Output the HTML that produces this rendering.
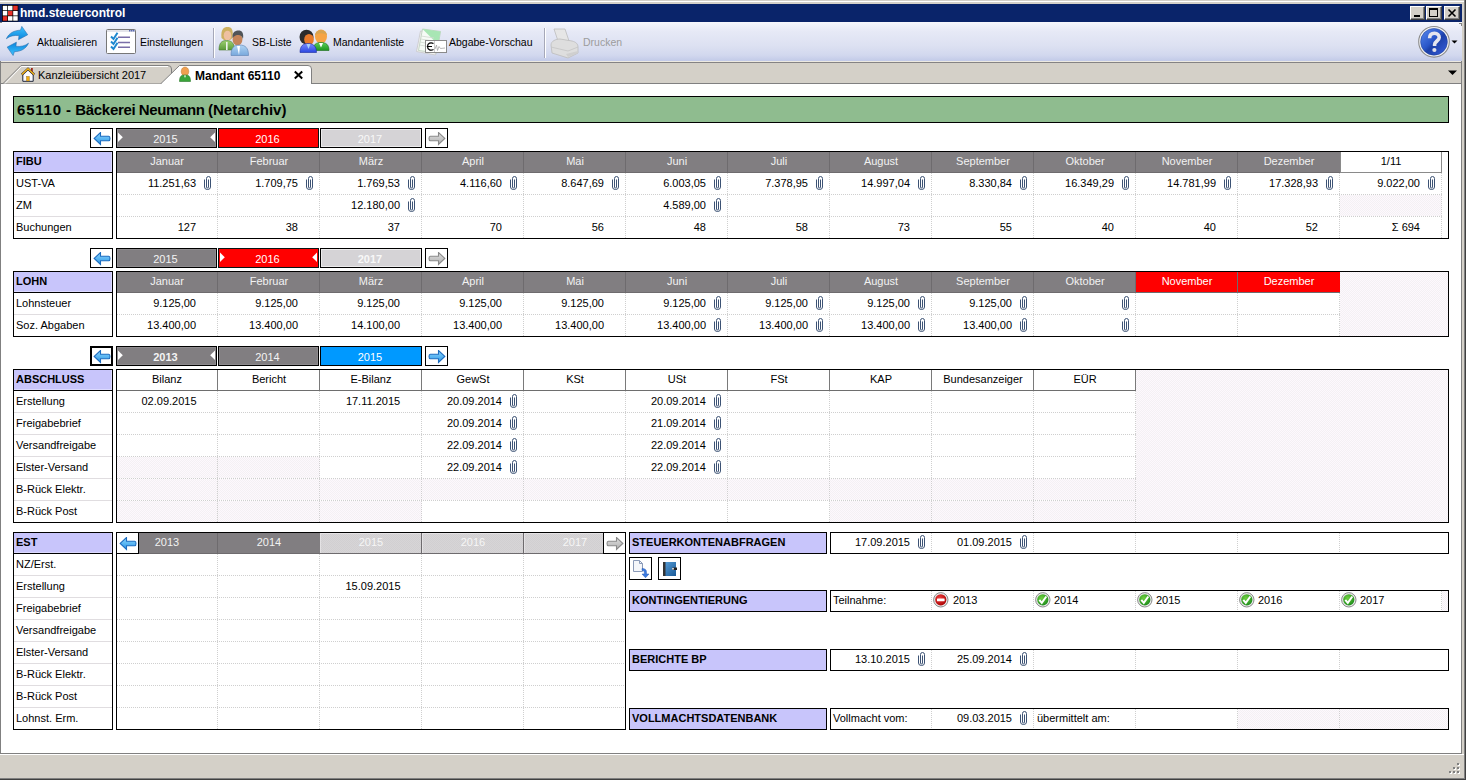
<!DOCTYPE html>
<html><head><meta charset="utf-8"><title>hmd.steuercontrol</title>
<style>
html,body{margin:0;padding:0;}
body{width:1466px;height:780px;overflow:hidden;position:relative;background:#d4d0c8;font-family:"Liberation Sans", sans-serif;}
div{position:absolute;box-sizing:border-box;}
.t{white-space:nowrap;}
</style></head><body>
<div style="left:0px;top:1px;width:1464px;height:1px;background:#ffffff"></div>
<div style="left:1464px;top:0px;width:1px;height:780px;background:#808080"></div>
<div style="left:1465px;top:0px;width:1px;height:780px;background:#404040"></div>
<div style="left:0px;top:778px;width:1464px;height:1px;background:#808080"></div>
<div style="left:0px;top:779px;width:1466px;height:1px;background:#404040"></div>
<div style="left:0px;top:4px;width:1462px;height:18px;background:#0a246a"></div>
<svg style="position:absolute;left:2px;top:5px;" width="17" height="17" viewBox="0 0 17 17"><rect x="0" y="0" width="16.4" height="16.4" fill="#000"/><rect x="0.80" y="0.80" width="4.5" height="4.5" fill="#ffffff"/><rect x="6.00" y="0.80" width="4.5" height="4.5" fill="#ffffff"/><rect x="11.20" y="0.80" width="4.5" height="4.5" fill="#e8312a"/><rect x="0.80" y="6.00" width="4.5" height="4.5" fill="#ffffff"/><rect x="6.00" y="6.00" width="4.5" height="4.5" fill="#e8312a"/><rect x="11.20" y="6.00" width="4.5" height="4.5" fill="#ffffff"/><rect x="0.80" y="11.20" width="4.5" height="4.5" fill="#e8312a"/><rect x="6.00" y="11.20" width="4.5" height="4.5" fill="#ffffff"/><rect x="11.20" y="11.20" width="4.5" height="4.5" fill="#ffffff"/></svg>
<div class="t" style="left:20px;top:2.84px;line-height:20px;font-size:12px;font-weight:bold;color:#ffffff;">hmd.steuercontrol</div>
<div style="left:1410px;top:6px;width:15px;height:14px;background:#d4d0c8;border-top:1px solid #fff;border-left:1px solid #fff;border-right:1px solid #404040;border-bottom:1px solid #404040;box-shadow:inset -1px -1px 0 #808080"></div>
<svg style="position:absolute;left:1410px;top:6px;" width="15" height="14" viewBox="0 0 15 14"><rect x="4" y="9" width="6" height="2" fill="#000"/></svg>
<div style="left:1426px;top:6px;width:16px;height:14px;background:#d4d0c8;border-top:1px solid #fff;border-left:1px solid #fff;border-right:1px solid #404040;border-bottom:1px solid #404040;box-shadow:inset -1px -1px 0 #808080"></div>
<svg style="position:absolute;left:1426px;top:6px;" width="16" height="14" viewBox="0 0 16 14"><rect x="3.5" y="2.5" width="8" height="8" fill="none" stroke="#000" stroke-width="1"/><rect x="3" y="2" width="9" height="2" fill="#000"/></svg>
<div style="left:1444px;top:6px;width:16px;height:14px;background:#d4d0c8;border-top:1px solid #fff;border-left:1px solid #fff;border-right:1px solid #404040;border-bottom:1px solid #404040;box-shadow:inset -1px -1px 0 #808080"></div>
<svg style="position:absolute;left:1444px;top:6px;" width="16" height="14" viewBox="0 0 16 14"><path d="M4.5,3.5 L11.5,10.5 M11.5,3.5 L4.5,10.5" stroke="#000" stroke-width="1.6"/></svg>
<div style="left:0px;top:22px;width:1462px;height:39px;background:linear-gradient(#f6f7fd 0%,#e6e9f6 25%,#dde1f2 60%,#d2d8ee 85%,#c2cae8 100%)"></div>
<div style="left:0px;top:61px;width:1462px;height:1px;background:#ece9e0"></div>
<div style="left:0px;top:62px;width:1462px;height:1px;background:#848284"></div>
<div style="left:1459px;top:23px;width:3px;height:1px;background:#808080"></div>
<div style="left:1461px;top:23px;width:1px;height:3px;background:#808080"></div>
<div style="left:0px;top:22px;width:2px;height:1px;background:#808080"></div>
<svg style="position:absolute;left:0px;top:22px;" width="36" height="40" viewBox="0 0 36 40"><defs><linearGradient id="rg" x1="0" y1="0" x2="0" y2="1"><stop offset="0" stop-color="#40c4ff"/><stop offset="1" stop-color="#0a84dc"/></linearGradient></defs><path d="M6.4,16.7 C9,11 14,8.5 20.5,8.2 L21.8,4.4 L27.7,12.8 L18.5,17.7 L19,13.6 C14,13 10,14 6.4,16.7 Z" fill="url(#rg)" stroke="#2a70b0" stroke-width="0.6"/><path d="M6.4,16.7 C9,11 14,8.5 20.5,8.2 L21.8,4.4 L27.7,12.8 L18.5,17.7 L19,13.6 C14,13 10,14 6.4,16.7 Z" transform="rotate(180 17.45 18.95)" fill="url(#rg)" stroke="#2a70b0" stroke-width="0.6"/></svg>
<div class="t" style="left:37px;top:32.36px;line-height:20px;font-size:10.5px;font-weight:normal;color:#000;">Aktualisieren</div>
<svg style="position:absolute;left:106px;top:29px;" width="30" height="25" viewBox="0 0 30 25"><rect x="0.5" y="0.5" width="29" height="24" rx="1" fill="#fff" stroke="#777" stroke-width="1"/><rect x="1" y="1" width="28" height="2" fill="#e4e4ea"/><rect x="23" y="1" width="1.5" height="1.5" fill="#5a6ab0"/><rect x="25" y="1" width="1.5" height="1.5" fill="#5a6ab0"/><rect x="27" y="1" width="1.5" height="1.5" fill="#5a6ab0"/><path d="M5,7.5 L7.5,10 L11.5,3.8 M5,12.5 L7.5,15 L11.5,8.8 M5,17.5 L7.5,20 L11.5,13.8" fill="none" stroke="#1f88d0" stroke-width="2"/><path d="M12,8.3 H24 M12,13.5 H24 M12,18.3 H24" stroke="#7a6ea8" stroke-width="1.4"/></svg>
<div class="t" style="left:140px;top:32.36px;line-height:20px;font-size:10.5px;font-weight:normal;color:#000;">Einstellungen</div>
<div style="left:213px;top:28px;width:1px;height:30px;background:#a6a8b8"></div>
<div style="left:214px;top:28px;width:1px;height:30px;background:#ffffff"></div>
<svg style="position:absolute;left:216px;top:24px;" width="36" height="34" viewBox="0 0 36 34"><defs><linearGradient id="gb1" x1="0" y1="0" x2="0" y2="1"><stop offset="0" stop-color="#9cd070"/><stop offset="1" stop-color="#5a9a3a"/></linearGradient><linearGradient id="bb1" x1="0" y1="0" x2="0" y2="1"><stop offset="0" stop-color="#b0d4f4"/><stop offset="1" stop-color="#78a8dc"/></linearGradient></defs><path d="M5.5,14 C4.5,5 8,3 11.5,3 C15.5,3 17.5,5 16.5,14 L14,16 L8,16 Z" fill="#cdb060"/><ellipse cx="11.5" cy="11.5" rx="3.8" ry="4.8" fill="#eec0a0"/><path d="M3,26 C3,19 5.5,16.5 10.5,16.5 C15.5,16.5 18.5,19 18.5,26 Z" fill="url(#gb1)" stroke="#4a7a30" stroke-width="0.6"/><rect x="10" y="18" width="1.6" height="8" fill="#eef2ee"/><ellipse cx="21.5" cy="15.5" rx="4.9" ry="6" fill="#c4845a"/><path d="M16.6,14 C16,7.5 20,6.5 22.5,6.5 C26,6.5 28,9 27,15 C26,11.5 24,10.5 21,11 C19,11.5 17.5,12.5 16.6,14 Z" fill="#505458"/><path d="M15,31.5 C15,24 17.5,21 23.5,21 C29.5,21 32.5,24 32.5,31.5 Z" fill="url(#bb1)" stroke="#5a80b0" stroke-width="0.6"/><path d="M21,22 L23,31 L24,22 Z" fill="#fff"/></svg>
<div class="t" style="left:252px;top:32.36px;line-height:20px;font-size:10.5px;font-weight:normal;color:#000;">SB-Liste</div>
<svg style="position:absolute;left:296px;top:24px;" width="36" height="34" viewBox="0 0 36 34"><defs><linearGradient id="gb2" x1="0" y1="0" x2="0" y2="1"><stop offset="0" stop-color="#5cd05c"/><stop offset="1" stop-color="#1c961c"/></linearGradient><linearGradient id="bb2" x1="0" y1="0" x2="0" y2="1"><stop offset="0" stop-color="#7a8cff"/><stop offset="1" stop-color="#2a46e0"/></linearGradient></defs><ellipse cx="25" cy="12.5" rx="6" ry="7" fill="#f6a444"/><path d="M19,11.5 C19,4.5 31,4.5 31,11.5 C29,8.5 21,8.5 19,11.5 Z" fill="#d8a450"/><path d="M17,26.5 C17,20.5 20,18.5 25,18.5 C30,18.5 33,20.5 33,26.5 Z" fill="url(#gb2)" stroke="#1a6a1a" stroke-width="0.6"/><path d="M23,19 L25,23.5 L27,19 Z" fill="#fff"/><ellipse cx="10.5" cy="13" rx="7" ry="7.3" fill="#2c2c2c"/><ellipse cx="13" cy="15.5" rx="4.8" ry="5.5" fill="#e87a2a"/><path d="M4,28.5 C4,22 7,19.5 12,19.5 C17,19.5 20.5,22 20.5,28.5 Z" fill="url(#bb2)" stroke="#1a2aa0" stroke-width="0.6"/><path d="M10.5,20 L12.5,25 L14.5,20 Z" fill="#a8d0f8"/></svg>
<div class="t" style="left:333px;top:32.36px;line-height:20px;font-size:10.5px;font-weight:normal;color:#000;">Mandantenliste</div>
<svg style="position:absolute;left:414px;top:26px;" width="34" height="32" viewBox="0 0 34 32"><path d="M2.5,25.5 L6.5,5 L25,7.5 L21.5,29 Z" fill="#f2f2f2" stroke="#c8c8c8" stroke-width="0.8"/><path d="M4.5,24.5 L8.5,3 L26.5,5.5 L23,27 Z" fill="#f6fbf6" stroke="#b8ccb8" stroke-width="0.8"/><path d="M8.5,3 L26.5,5.5 L24.8,16 L21,15.5 Z" fill="#a8e6b4"/><path d="M7,10 L20,12 M6.5,13 L19,15 M6,16 L11,17 M5.5,19 L11,20" stroke="#d0d8d0" stroke-width="0.8"/><rect x="11.5" y="14.5" width="21" height="12" fill="#fff" stroke="#8a8a8a" stroke-width="1"/><path d="M19.5,17.5 C17,16 13.5,17 13.5,20.5 C13.5,24 17,25 19.5,23.5 M12.8,20.5 H18" fill="none" stroke="#000" stroke-width="1.2"/><path d="M20.5,15 V26" stroke="#c0c0c0" stroke-width="0.8"/><path d="M21,23 L22.5,19 L23.5,24.5 L25,20.5 L26.5,22.5 L31,22" fill="none" stroke="#999" stroke-width="0.7"/></svg>
<div class="t" style="left:449px;top:32.36px;line-height:20px;font-size:10.5px;font-weight:normal;color:#000;">Abgabe-Vorschau</div>
<div style="left:544px;top:28px;width:1px;height:30px;background:#a6a8b8"></div>
<div style="left:545px;top:28px;width:1px;height:30px;background:#ffffff"></div>
<svg style="position:absolute;left:550px;top:25px;" width="32" height="34" viewBox="0 0 32 34"><path d="M4,4 L15,4 L19,16 L8,16 Z" fill="#e6e6e6" stroke="#bdbdbd" stroke-width="0.8"/><path d="M1,20 C1,16 6,14 10,14 L22,16 C26,17 28,19 28,22 L28,28 L18,33 L2,28 Z" fill="#dedede" stroke="#bdbdbd" stroke-width="0.8"/><path d="M1,22 L18,26 L28,22" fill="none" stroke="#c4c4c4" stroke-width="0.8"/><path d="M16,29 L28,26 L28,28 L18,32 Z" fill="#cfcfcf"/></svg>
<div class="t" style="left:583px;top:32.36px;line-height:20px;font-size:10.5px;font-weight:normal;color:#9c9c9c;">Drucken</div>
<svg style="position:absolute;left:1417px;top:25px;" width="34" height="34" viewBox="0 0 34 34"><defs><linearGradient id="hg" x1="0" y1="0" x2="1" y2="1"><stop offset="0" stop-color="#5a8cf0"/><stop offset="0.45" stop-color="#2a56c8"/><stop offset="0.55" stop-color="#1c40a8"/><stop offset="1" stop-color="#3a60e0"/></linearGradient></defs><circle cx="17" cy="16.8" r="15.3" fill="#f4f4f4" stroke="#8c8c8c" stroke-width="1.1"/><circle cx="17" cy="16.8" r="13.4" fill="url(#hg)" stroke="#1a3a90" stroke-width="0.5"/><path d="M12.6,13.2 C12.6,9.6 15,8.3 17.5,8.3 C20.4,8.3 22.2,10.2 22.2,12.6 C22.2,15.8 17.6,16.2 17.6,19.6 V21" fill="none" stroke="#e6e6ee" stroke-width="3.6"/><circle cx="17.4" cy="25" r="2.1" fill="#e0e0e8"/></svg>
<svg style="position:absolute;left:1451px;top:40px;" width="8" height="5" viewBox="0 0 8 5"><path d="M0.5,0.5 L6.5,0.5 L3.5,3.5 Z" fill="#000"/></svg>
<div style="left:0px;top:63px;width:1462px;height:20px;background:#d4d0c8"></div>
<div style="left:0px;top:61px;width:1px;height:693px;background:#808080"></div>
<div style="left:0px;top:83px;width:162px;height:1px;background:#808080"></div>
<div style="left:311px;top:83px;width:1151px;height:1px;background:#808080"></div>
<svg style="position:absolute;left:0px;top:63px;" width="175" height="21" viewBox="0 0 175 21"><path d="M3,20.5 L21,2.5 L168,2.5 Q171.5,2.5 171.5,6 L171.5,20.5" fill="#d4d0c8" stroke="#808080" stroke-width="1"/><path d="M5,20.5 L21.5,3.5 L168,3.5" fill="none" stroke="#ffffff" stroke-width="1"/></svg>
<svg style="position:absolute;left:20px;top:67px;" width="16" height="16" viewBox="0 0 16 16"><rect x="11" y="1" width="1.8" height="4.5" fill="#a02818"/><path d="M2.8,14.3 L2.8,7.6 L8,2.6 L13.2,7.6 L13.2,14.3 Z" fill="#fbfbff" stroke="#1c2438" stroke-width="1"/><path d="M1.8,7.6 L8,1.8 L14.2,7.6" fill="none" stroke="#303040" stroke-width="2.4"/><path d="M1.8,7.6 L8,1.8 L14.2,7.6" fill="none" stroke="#f4b414" stroke-width="1.4"/><rect x="6.4" y="9.3" width="3" height="4.7" fill="#f2ac10" stroke="#8a7040" stroke-width="0.4"/></svg>
<div class="t" style="left:38px;top:65.19px;line-height:20px;font-size:11px;font-weight:normal;color:#000;">Kanzlei&uuml;bersicht 2017</div>
<svg style="position:absolute;left:158px;top:63px;" width="158" height="22" viewBox="0 0 158 22"><path d="M3,21 L3,20.5 L21.5,2.5 L150,2.5 Q153.5,2.5 153.5,6 L153.5,21" fill="#ffffff" stroke="#808080" stroke-width="1"/></svg>
<div style="left:162px;top:84px;width:149px;height:1px;background:#ffffff"></div>
<svg style="position:absolute;left:177px;top:66px;" width="16" height="18" viewBox="0 0 16 18"><ellipse cx="8" cy="5.5" rx="3.8" ry="4.5" fill="#f0a050" stroke="#b87a30" stroke-width="0.5"/><path d="M2.5,15.5 C2.5,10 4.5,9 8,9 C11.5,9 13.5,10 13.5,15.5 Z" fill="#3aa43a" stroke="#2a7a2a" stroke-width="0.6"/><path d="M7,9.5 L8,12 L9,9.5 Z" fill="#fff"/></svg>
<div class="t" style="left:195px;top:65.84px;line-height:20px;font-size:12px;font-weight:bold;color:#000;">Mandant 65110</div>
<svg style="position:absolute;left:293px;top:70px;" width="12" height="11" viewBox="0 0 12 11"><path d="M1.8,1.5 L9.2,8.5 M9.2,1.5 L1.8,8.5" stroke="#000" stroke-width="2"/></svg>
<svg style="position:absolute;left:1448px;top:70px;" width="10" height="6" viewBox="0 0 10 6"><path d="M0,0.5 L9,0.5 L4.5,5 Z" fill="#000"/></svg>
<div style="left:1px;top:84px;width:1460px;height:669px;background:#ffffff"></div>
<div style="left:0px;top:753px;width:1462px;height:1px;background:#808080"></div>
<div style="left:1461px;top:61px;width:1px;height:693px;background:#808080"></div>
<div style="left:0px;top:754px;width:1464px;height:1px;background:#ffffff"></div>
<div style="left:1458px;top:764px;width:2px;height:2px;background:#ffffff"></div>
<div style="left:1457px;top:763px;width:2px;height:2px;background:#808080"></div>
<div style="left:1454px;top:768px;width:2px;height:2px;background:#ffffff"></div>
<div style="left:1453px;top:767px;width:2px;height:2px;background:#808080"></div>
<div style="left:1458px;top:768px;width:2px;height:2px;background:#ffffff"></div>
<div style="left:1457px;top:767px;width:2px;height:2px;background:#808080"></div>
<div style="left:1450px;top:772px;width:2px;height:2px;background:#ffffff"></div>
<div style="left:1449px;top:771px;width:2px;height:2px;background:#808080"></div>
<div style="left:1454px;top:772px;width:2px;height:2px;background:#ffffff"></div>
<div style="left:1453px;top:771px;width:2px;height:2px;background:#808080"></div>
<div style="left:1458px;top:772px;width:2px;height:2px;background:#ffffff"></div>
<div style="left:1457px;top:771px;width:2px;height:2px;background:#808080"></div>
<div style="left:13px;top:96px;width:1436px;height:27px;background:#8fbc8f;border:1px solid #000"></div>
<div class="t" style="left:17px;top:99.80px;line-height:20px;font-size:15px;font-weight:bold;color:#000;"><span style="letter-spacing:0.8px">65110</span> - <span style="letter-spacing:-0.3px">B&auml;ckerei</span><span style="word-spacing:-0.8px"> <span style="letter-spacing:-0.35px">Neumann</span> (Netarchiv)</span></div>
<div style="left:90px;top:128px;width:23px;height:20px;background:#fff;border:1px solid #000"></div>
<svg style="position:absolute;left:93px;top:132px;" width="18" height="14" viewBox="0 0 18 14"><defs><linearGradient id="la93_131" x1="0" y1="0" x2="0" y2="1"><stop offset="0" stop-color="#8ed8ff"/><stop offset="1" stop-color="#2a96e6"/></linearGradient></defs><path d="M1.2,6.4 L7.5,0.5 L7.5,4.3 L15.7,4.3 Q17,4.3 17,6.5 Q17,8.7 15.7,8.7 L7.5,8.7 L7.5,12.4 Z" fill="url(#la93_131)" stroke="#1c6cc0" stroke-width="1.1"/></svg>
<div style="left:116px;top:128px;width:101px;height:20px;background:#817e81;border:1px solid #000;box-shadow:inset 0 0 0 1px #8e8b8e"></div>
<svg style="position:absolute;left:118px;top:131px;" width="6" height="14" viewBox="0 0 6 14"><path d="M0,1.6 L4.8,6.3 L0,11 Z" fill="#fff"/></svg>
<svg style="position:absolute;left:210px;top:131px;" width="6" height="14" viewBox="0 0 6 14"><path d="M5,1.6 L0.2,6.3 L5,11 Z" fill="#fff"/></svg>
<div class="t" style="left:115px;width:101px;text-align:center;top:129.19px;line-height:20px;font-size:11px;font-weight:normal;color:#f4f4f4;">2015</div>
<div style="left:218px;top:128px;width:101px;height:20px;background:#ff0000;border:1px solid #0a1414"></div>
<div class="t" style="left:217px;width:101px;text-align:center;top:129.19px;line-height:20px;font-size:11px;font-weight:normal;color:#ffffff;">2016</div>
<div style="left:320px;top:128px;width:102px;height:20px;background:#d5d3d6;border:1px solid #000;box-shadow:inset 1px 1px 0 #ecebec, inset -1px -1px 0 #ecebec"></div>
<div class="t" style="left:319px;width:102px;text-align:center;top:129.19px;line-height:20px;font-size:11px;font-weight:normal;color:#f8f8f8;">2017</div>
<div style="left:425px;top:128px;width:23px;height:20px;background:#fff;border:1px solid #000"></div>
<svg style="position:absolute;left:428px;top:132px;" width="18" height="14" viewBox="0 0 18 14"><defs><linearGradient id="ra428_131" x1="0" y1="0" x2="0" y2="1"><stop offset="0" stop-color="#e0e0e0"/><stop offset="1" stop-color="#b0b0b0"/></linearGradient></defs><path d="M16.8,6.4 L10.5,0.5 L10.5,4.3 L2.3,4.3 Q1,4.3 1,6.5 Q1,8.7 2.3,8.7 L10.5,8.7 L10.5,12.4 Z" fill="url(#ra428_131)" stroke="#8a8a8a" stroke-width="1.1"/></svg>
<div style="left:13px;top:151px;width:100px;height:88px;background:#fff;border:1px solid #000"></div>
<div style="left:14px;top:152px;width:98px;height:20px;background:#c8c5fb;box-shadow:inset -1px -1px 0 #dcdafe"></div>
<div style="left:14px;top:172px;width:98px;height:1px;background:#000"></div>
<div class="t" style="left:16px;top:151.19px;line-height:20px;font-size:11px;font-weight:bold;color:#000;">FIBU</div>
<div class="t" style="left:16px;top:173.19px;line-height:20px;font-size:11px;font-weight:normal;color:#000;">UST-VA</div>
<div style="left:14px;top:194px;width:98px;height:1px;background:#e0dde0"></div>
<div class="t" style="left:16px;top:195.19px;line-height:20px;font-size:11px;font-weight:normal;color:#000;">ZM</div>
<div style="left:14px;top:216px;width:98px;height:1px;background:#e0dde0"></div>
<div class="t" style="left:16px;top:217.19px;line-height:20px;font-size:11px;font-weight:normal;color:#000;">Buchungen</div>
<div style="left:116px;top:151px;width:1333px;height:88px;background:#fff"></div>
<div style="left:1340px;top:195px;width:102px;height:21px;background-color:#fcf8fc;background-image:repeating-conic-gradient(#f4f1f4 0 25%,#fdf8fd 0 50%);background-size:2px 2px;"></div>
<div style="left:117px;top:194px;width:1325px;height:1px;background-image:repeating-linear-gradient(90deg,#cfcfcf 0 1px,transparent 1px 2px)"></div>
<div style="left:117px;top:216px;width:1325px;height:1px;background-image:repeating-linear-gradient(90deg,#cfcfcf 0 1px,transparent 1px 2px)"></div>
<div style="left:217px;top:173px;width:1px;height:65px;background-image:repeating-linear-gradient(180deg,#cfcfcf 0 1px,transparent 1px 2px)"></div>
<div style="left:319px;top:173px;width:1px;height:65px;background-image:repeating-linear-gradient(180deg,#cfcfcf 0 1px,transparent 1px 2px)"></div>
<div style="left:421px;top:173px;width:1px;height:65px;background-image:repeating-linear-gradient(180deg,#cfcfcf 0 1px,transparent 1px 2px)"></div>
<div style="left:523px;top:173px;width:1px;height:65px;background-image:repeating-linear-gradient(180deg,#cfcfcf 0 1px,transparent 1px 2px)"></div>
<div style="left:625px;top:173px;width:1px;height:65px;background-image:repeating-linear-gradient(180deg,#cfcfcf 0 1px,transparent 1px 2px)"></div>
<div style="left:727px;top:173px;width:1px;height:65px;background-image:repeating-linear-gradient(180deg,#cfcfcf 0 1px,transparent 1px 2px)"></div>
<div style="left:829px;top:173px;width:1px;height:65px;background-image:repeating-linear-gradient(180deg,#cfcfcf 0 1px,transparent 1px 2px)"></div>
<div style="left:931px;top:173px;width:1px;height:65px;background-image:repeating-linear-gradient(180deg,#cfcfcf 0 1px,transparent 1px 2px)"></div>
<div style="left:1033px;top:173px;width:1px;height:65px;background-image:repeating-linear-gradient(180deg,#cfcfcf 0 1px,transparent 1px 2px)"></div>
<div style="left:1135px;top:173px;width:1px;height:65px;background-image:repeating-linear-gradient(180deg,#cfcfcf 0 1px,transparent 1px 2px)"></div>
<div style="left:1237px;top:173px;width:1px;height:65px;background-image:repeating-linear-gradient(180deg,#cfcfcf 0 1px,transparent 1px 2px)"></div>
<div style="left:1339px;top:173px;width:1px;height:65px;background-image:repeating-linear-gradient(180deg,#cfcfcf 0 1px,transparent 1px 2px)"></div>
<div style="left:1441px;top:173px;width:1px;height:65px;background-image:repeating-linear-gradient(180deg,#cfcfcf 0 1px,transparent 1px 2px)"></div>
<div style="left:117px;top:152px;width:101px;height:20px;background:#817e81"></div>
<div class="t" style="left:116px;width:102px;text-align:center;top:151.19px;line-height:20px;font-size:11px;font-weight:normal;color:#f2f2f2;">Januar</div>
<div style="left:218px;top:152px;width:102px;height:20px;background:#817e81"></div>
<div class="t" style="left:218px;width:102px;text-align:center;top:151.19px;line-height:20px;font-size:11px;font-weight:normal;color:#f2f2f2;">Februar</div>
<div style="left:320px;top:152px;width:102px;height:20px;background:#817e81"></div>
<div class="t" style="left:320px;width:102px;text-align:center;top:151.19px;line-height:20px;font-size:11px;font-weight:normal;color:#f2f2f2;">M&auml;rz</div>
<div style="left:422px;top:152px;width:102px;height:20px;background:#817e81"></div>
<div class="t" style="left:422px;width:102px;text-align:center;top:151.19px;line-height:20px;font-size:11px;font-weight:normal;color:#f2f2f2;">April</div>
<div style="left:524px;top:152px;width:102px;height:20px;background:#817e81"></div>
<div class="t" style="left:524px;width:102px;text-align:center;top:151.19px;line-height:20px;font-size:11px;font-weight:normal;color:#f2f2f2;">Mai</div>
<div style="left:626px;top:152px;width:102px;height:20px;background:#817e81"></div>
<div class="t" style="left:626px;width:102px;text-align:center;top:151.19px;line-height:20px;font-size:11px;font-weight:normal;color:#f2f2f2;">Juni</div>
<div style="left:728px;top:152px;width:102px;height:20px;background:#817e81"></div>
<div class="t" style="left:728px;width:102px;text-align:center;top:151.19px;line-height:20px;font-size:11px;font-weight:normal;color:#f2f2f2;">Juli</div>
<div style="left:830px;top:152px;width:102px;height:20px;background:#817e81"></div>
<div class="t" style="left:830px;width:102px;text-align:center;top:151.19px;line-height:20px;font-size:11px;font-weight:normal;color:#f2f2f2;">August</div>
<div style="left:932px;top:152px;width:102px;height:20px;background:#817e81"></div>
<div class="t" style="left:932px;width:102px;text-align:center;top:151.19px;line-height:20px;font-size:11px;font-weight:normal;color:#f2f2f2;">September</div>
<div style="left:1034px;top:152px;width:102px;height:20px;background:#817e81"></div>
<div class="t" style="left:1034px;width:102px;text-align:center;top:151.19px;line-height:20px;font-size:11px;font-weight:normal;color:#f2f2f2;">Oktober</div>
<div style="left:1136px;top:152px;width:102px;height:20px;background:#817e81"></div>
<div class="t" style="left:1136px;width:102px;text-align:center;top:151.19px;line-height:20px;font-size:11px;font-weight:normal;color:#f2f2f2;">November</div>
<div style="left:1238px;top:152px;width:102px;height:20px;background:#817e81"></div>
<div class="t" style="left:1238px;width:102px;text-align:center;top:151.19px;line-height:20px;font-size:11px;font-weight:normal;color:#f2f2f2;">Dezember</div>
<div style="left:217px;top:152px;width:1px;height:20px;background:#6e6b6e"></div>
<div style="left:319px;top:152px;width:1px;height:20px;background:#6e6b6e"></div>
<div style="left:421px;top:152px;width:1px;height:20px;background:#6e6b6e"></div>
<div style="left:523px;top:152px;width:1px;height:20px;background:#6e6b6e"></div>
<div style="left:625px;top:152px;width:1px;height:20px;background:#6e6b6e"></div>
<div style="left:727px;top:152px;width:1px;height:20px;background:#6e6b6e"></div>
<div style="left:829px;top:152px;width:1px;height:20px;background:#6e6b6e"></div>
<div style="left:931px;top:152px;width:1px;height:20px;background:#6e6b6e"></div>
<div style="left:1033px;top:152px;width:1px;height:20px;background:#6e6b6e"></div>
<div style="left:1135px;top:152px;width:1px;height:20px;background:#6e6b6e"></div>
<div style="left:1237px;top:152px;width:1px;height:20px;background:#6e6b6e"></div>
<div style="left:117px;top:172px;width:1223px;height:1px;background:#6e6b6e"></div>
<div style="left:1340px;top:152px;width:102px;height:21px;background:#fff;border-right:1px solid #8a8a8a;border-bottom:1px solid #8a8a8a;border-left:1px solid #8a8a8a"></div>
<div class="t" style="left:1340px;width:102px;text-align:center;top:151.19px;line-height:20px;font-size:11px;font-weight:normal;color:#000;">1/11</div>
<div class="t" style="left:116px;width:80px;text-align:right;top:173.19px;line-height:20px;font-size:11px;font-weight:normal;color:#000;">11.251,63</div>
<svg style="position:absolute;left:204px;top:176px;" width="8" height="14" viewBox="0 0 8 14"><path d="M0.5,3.5 V11 Q0.5,13.5 3.5,13.5 Q6.5,13.5 6.5,11 V2.5 Q6.5,0.5 4.5,0.5 Q2.5,0.5 2.5,2.5 V11 Q2.5,12 3.5,12 Q4.5,12 4.5,11 V3.5" fill="none" stroke="#3c5274" stroke-width="1"/></svg>
<div class="t" style="left:218px;width:80px;text-align:right;top:173.19px;line-height:20px;font-size:11px;font-weight:normal;color:#000;">1.709,75</div>
<svg style="position:absolute;left:306px;top:176px;" width="8" height="14" viewBox="0 0 8 14"><path d="M0.5,3.5 V11 Q0.5,13.5 3.5,13.5 Q6.5,13.5 6.5,11 V2.5 Q6.5,0.5 4.5,0.5 Q2.5,0.5 2.5,2.5 V11 Q2.5,12 3.5,12 Q4.5,12 4.5,11 V3.5" fill="none" stroke="#3c5274" stroke-width="1"/></svg>
<div class="t" style="left:320px;width:80px;text-align:right;top:173.19px;line-height:20px;font-size:11px;font-weight:normal;color:#000;">1.769,53</div>
<svg style="position:absolute;left:408px;top:176px;" width="8" height="14" viewBox="0 0 8 14"><path d="M0.5,3.5 V11 Q0.5,13.5 3.5,13.5 Q6.5,13.5 6.5,11 V2.5 Q6.5,0.5 4.5,0.5 Q2.5,0.5 2.5,2.5 V11 Q2.5,12 3.5,12 Q4.5,12 4.5,11 V3.5" fill="none" stroke="#3c5274" stroke-width="1"/></svg>
<div class="t" style="left:422px;width:80px;text-align:right;top:173.19px;line-height:20px;font-size:11px;font-weight:normal;color:#000;">4.116,60</div>
<svg style="position:absolute;left:510px;top:176px;" width="8" height="14" viewBox="0 0 8 14"><path d="M0.5,3.5 V11 Q0.5,13.5 3.5,13.5 Q6.5,13.5 6.5,11 V2.5 Q6.5,0.5 4.5,0.5 Q2.5,0.5 2.5,2.5 V11 Q2.5,12 3.5,12 Q4.5,12 4.5,11 V3.5" fill="none" stroke="#3c5274" stroke-width="1"/></svg>
<div class="t" style="left:524px;width:80px;text-align:right;top:173.19px;line-height:20px;font-size:11px;font-weight:normal;color:#000;">8.647,69</div>
<svg style="position:absolute;left:612px;top:176px;" width="8" height="14" viewBox="0 0 8 14"><path d="M0.5,3.5 V11 Q0.5,13.5 3.5,13.5 Q6.5,13.5 6.5,11 V2.5 Q6.5,0.5 4.5,0.5 Q2.5,0.5 2.5,2.5 V11 Q2.5,12 3.5,12 Q4.5,12 4.5,11 V3.5" fill="none" stroke="#3c5274" stroke-width="1"/></svg>
<div class="t" style="left:626px;width:80px;text-align:right;top:173.19px;line-height:20px;font-size:11px;font-weight:normal;color:#000;">6.003,05</div>
<svg style="position:absolute;left:714px;top:176px;" width="8" height="14" viewBox="0 0 8 14"><path d="M0.5,3.5 V11 Q0.5,13.5 3.5,13.5 Q6.5,13.5 6.5,11 V2.5 Q6.5,0.5 4.5,0.5 Q2.5,0.5 2.5,2.5 V11 Q2.5,12 3.5,12 Q4.5,12 4.5,11 V3.5" fill="none" stroke="#3c5274" stroke-width="1"/></svg>
<div class="t" style="left:728px;width:80px;text-align:right;top:173.19px;line-height:20px;font-size:11px;font-weight:normal;color:#000;">7.378,95</div>
<svg style="position:absolute;left:816px;top:176px;" width="8" height="14" viewBox="0 0 8 14"><path d="M0.5,3.5 V11 Q0.5,13.5 3.5,13.5 Q6.5,13.5 6.5,11 V2.5 Q6.5,0.5 4.5,0.5 Q2.5,0.5 2.5,2.5 V11 Q2.5,12 3.5,12 Q4.5,12 4.5,11 V3.5" fill="none" stroke="#3c5274" stroke-width="1"/></svg>
<div class="t" style="left:830px;width:80px;text-align:right;top:173.19px;line-height:20px;font-size:11px;font-weight:normal;color:#000;">14.997,04</div>
<svg style="position:absolute;left:918px;top:176px;" width="8" height="14" viewBox="0 0 8 14"><path d="M0.5,3.5 V11 Q0.5,13.5 3.5,13.5 Q6.5,13.5 6.5,11 V2.5 Q6.5,0.5 4.5,0.5 Q2.5,0.5 2.5,2.5 V11 Q2.5,12 3.5,12 Q4.5,12 4.5,11 V3.5" fill="none" stroke="#3c5274" stroke-width="1"/></svg>
<div class="t" style="left:932px;width:80px;text-align:right;top:173.19px;line-height:20px;font-size:11px;font-weight:normal;color:#000;">8.330,84</div>
<svg style="position:absolute;left:1020px;top:176px;" width="8" height="14" viewBox="0 0 8 14"><path d="M0.5,3.5 V11 Q0.5,13.5 3.5,13.5 Q6.5,13.5 6.5,11 V2.5 Q6.5,0.5 4.5,0.5 Q2.5,0.5 2.5,2.5 V11 Q2.5,12 3.5,12 Q4.5,12 4.5,11 V3.5" fill="none" stroke="#3c5274" stroke-width="1"/></svg>
<div class="t" style="left:1034px;width:80px;text-align:right;top:173.19px;line-height:20px;font-size:11px;font-weight:normal;color:#000;">16.349,29</div>
<svg style="position:absolute;left:1122px;top:176px;" width="8" height="14" viewBox="0 0 8 14"><path d="M0.5,3.5 V11 Q0.5,13.5 3.5,13.5 Q6.5,13.5 6.5,11 V2.5 Q6.5,0.5 4.5,0.5 Q2.5,0.5 2.5,2.5 V11 Q2.5,12 3.5,12 Q4.5,12 4.5,11 V3.5" fill="none" stroke="#3c5274" stroke-width="1"/></svg>
<div class="t" style="left:1136px;width:80px;text-align:right;top:173.19px;line-height:20px;font-size:11px;font-weight:normal;color:#000;">14.781,99</div>
<svg style="position:absolute;left:1224px;top:176px;" width="8" height="14" viewBox="0 0 8 14"><path d="M0.5,3.5 V11 Q0.5,13.5 3.5,13.5 Q6.5,13.5 6.5,11 V2.5 Q6.5,0.5 4.5,0.5 Q2.5,0.5 2.5,2.5 V11 Q2.5,12 3.5,12 Q4.5,12 4.5,11 V3.5" fill="none" stroke="#3c5274" stroke-width="1"/></svg>
<div class="t" style="left:1238px;width:80px;text-align:right;top:173.19px;line-height:20px;font-size:11px;font-weight:normal;color:#000;">17.328,93</div>
<svg style="position:absolute;left:1326px;top:176px;" width="8" height="14" viewBox="0 0 8 14"><path d="M0.5,3.5 V11 Q0.5,13.5 3.5,13.5 Q6.5,13.5 6.5,11 V2.5 Q6.5,0.5 4.5,0.5 Q2.5,0.5 2.5,2.5 V11 Q2.5,12 3.5,12 Q4.5,12 4.5,11 V3.5" fill="none" stroke="#3c5274" stroke-width="1"/></svg>
<div class="t" style="left:1340px;width:80px;text-align:right;top:173.19px;line-height:20px;font-size:11px;font-weight:normal;color:#000;">9.022,00</div>
<svg style="position:absolute;left:1428px;top:176px;" width="8" height="14" viewBox="0 0 8 14"><path d="M0.5,3.5 V11 Q0.5,13.5 3.5,13.5 Q6.5,13.5 6.5,11 V2.5 Q6.5,0.5 4.5,0.5 Q2.5,0.5 2.5,2.5 V11 Q2.5,12 3.5,12 Q4.5,12 4.5,11 V3.5" fill="none" stroke="#3c5274" stroke-width="1"/></svg>
<div class="t" style="left:320px;width:80px;text-align:right;top:195.19px;line-height:20px;font-size:11px;font-weight:normal;color:#000;">12.180,00</div>
<svg style="position:absolute;left:408px;top:198px;" width="8" height="14" viewBox="0 0 8 14"><path d="M0.5,3.5 V11 Q0.5,13.5 3.5,13.5 Q6.5,13.5 6.5,11 V2.5 Q6.5,0.5 4.5,0.5 Q2.5,0.5 2.5,2.5 V11 Q2.5,12 3.5,12 Q4.5,12 4.5,11 V3.5" fill="none" stroke="#3c5274" stroke-width="1"/></svg>
<div class="t" style="left:626px;width:80px;text-align:right;top:195.19px;line-height:20px;font-size:11px;font-weight:normal;color:#000;">4.589,00</div>
<svg style="position:absolute;left:714px;top:198px;" width="8" height="14" viewBox="0 0 8 14"><path d="M0.5,3.5 V11 Q0.5,13.5 3.5,13.5 Q6.5,13.5 6.5,11 V2.5 Q6.5,0.5 4.5,0.5 Q2.5,0.5 2.5,2.5 V11 Q2.5,12 3.5,12 Q4.5,12 4.5,11 V3.5" fill="none" stroke="#3c5274" stroke-width="1"/></svg>
<div class="t" style="left:116px;width:80px;text-align:right;top:217.19px;line-height:20px;font-size:11px;font-weight:normal;color:#000;">127</div>
<div class="t" style="left:218px;width:80px;text-align:right;top:217.19px;line-height:20px;font-size:11px;font-weight:normal;color:#000;">38</div>
<div class="t" style="left:320px;width:80px;text-align:right;top:217.19px;line-height:20px;font-size:11px;font-weight:normal;color:#000;">37</div>
<div class="t" style="left:422px;width:80px;text-align:right;top:217.19px;line-height:20px;font-size:11px;font-weight:normal;color:#000;">70</div>
<div class="t" style="left:524px;width:80px;text-align:right;top:217.19px;line-height:20px;font-size:11px;font-weight:normal;color:#000;">56</div>
<div class="t" style="left:626px;width:80px;text-align:right;top:217.19px;line-height:20px;font-size:11px;font-weight:normal;color:#000;">48</div>
<div class="t" style="left:728px;width:80px;text-align:right;top:217.19px;line-height:20px;font-size:11px;font-weight:normal;color:#000;">58</div>
<div class="t" style="left:830px;width:80px;text-align:right;top:217.19px;line-height:20px;font-size:11px;font-weight:normal;color:#000;">73</div>
<div class="t" style="left:932px;width:80px;text-align:right;top:217.19px;line-height:20px;font-size:11px;font-weight:normal;color:#000;">55</div>
<div class="t" style="left:1034px;width:80px;text-align:right;top:217.19px;line-height:20px;font-size:11px;font-weight:normal;color:#000;">40</div>
<div class="t" style="left:1136px;width:80px;text-align:right;top:217.19px;line-height:20px;font-size:11px;font-weight:normal;color:#000;">40</div>
<div class="t" style="left:1238px;width:80px;text-align:right;top:217.19px;line-height:20px;font-size:11px;font-weight:normal;color:#000;">52</div>
<div class="t" style="left:1340px;width:80px;text-align:right;top:217.19px;line-height:20px;font-size:11px;font-weight:normal;color:#000;">&Sigma; 694</div>
<div style="left:90px;top:248px;width:23px;height:20px;background:#fff;border:1px solid #000"></div>
<svg style="position:absolute;left:93px;top:252px;" width="18" height="14" viewBox="0 0 18 14"><defs><linearGradient id="la93_251" x1="0" y1="0" x2="0" y2="1"><stop offset="0" stop-color="#8ed8ff"/><stop offset="1" stop-color="#2a96e6"/></linearGradient></defs><path d="M1.2,6.4 L7.5,0.5 L7.5,4.3 L15.7,4.3 Q17,4.3 17,6.5 Q17,8.7 15.7,8.7 L7.5,8.7 L7.5,12.4 Z" fill="url(#la93_251)" stroke="#1c6cc0" stroke-width="1.1"/></svg>
<div style="left:116px;top:248px;width:101px;height:20px;background:#817e81;border:1px solid #000;box-shadow:inset 0 0 0 1px #8e8b8e"></div>
<div class="t" style="left:115px;width:101px;text-align:center;top:249.19px;line-height:20px;font-size:11px;font-weight:normal;color:#f4f4f4;">2015</div>
<div style="left:218px;top:248px;width:101px;height:20px;background:#ff0000;border:1px solid #0a1414"></div>
<svg style="position:absolute;left:220px;top:251px;" width="6" height="14" viewBox="0 0 6 14"><path d="M0,1.6 L4.8,6.3 L0,11 Z" fill="#fff"/></svg>
<svg style="position:absolute;left:312px;top:251px;" width="6" height="14" viewBox="0 0 6 14"><path d="M5,1.6 L0.2,6.3 L5,11 Z" fill="#fff"/></svg>
<div class="t" style="left:217px;width:101px;text-align:center;top:249.19px;line-height:20px;font-size:11px;font-weight:normal;color:#ffffff;">2016</div>
<div style="left:320px;top:248px;width:102px;height:20px;background:#d5d3d6;border:1px solid #000;box-shadow:inset 1px 1px 0 #ecebec, inset -1px -1px 0 #ecebec"></div>
<div class="t" style="left:319px;width:102px;text-align:center;top:249.19px;line-height:20px;font-size:11px;font-weight:bold;color:#f8f8f8;">2017</div>
<div style="left:425px;top:248px;width:23px;height:20px;background:#fff;border:1px solid #000"></div>
<svg style="position:absolute;left:428px;top:252px;" width="18" height="14" viewBox="0 0 18 14"><defs><linearGradient id="ra428_251" x1="0" y1="0" x2="0" y2="1"><stop offset="0" stop-color="#e0e0e0"/><stop offset="1" stop-color="#b0b0b0"/></linearGradient></defs><path d="M16.8,6.4 L10.5,0.5 L10.5,4.3 L2.3,4.3 Q1,4.3 1,6.5 Q1,8.7 2.3,8.7 L10.5,8.7 L10.5,12.4 Z" fill="url(#ra428_251)" stroke="#8a8a8a" stroke-width="1.1"/></svg>
<div style="left:13px;top:271px;width:100px;height:66px;background:#fff;border:1px solid #000"></div>
<div style="left:14px;top:272px;width:98px;height:20px;background:#c8c5fb;box-shadow:inset -1px -1px 0 #dcdafe"></div>
<div style="left:14px;top:292px;width:98px;height:1px;background:#000"></div>
<div class="t" style="left:16px;top:271.19px;line-height:20px;font-size:11px;font-weight:bold;color:#000;">LOHN</div>
<div class="t" style="left:16px;top:293.19px;line-height:20px;font-size:11px;font-weight:normal;color:#000;">Lohnsteuer</div>
<div style="left:14px;top:314px;width:98px;height:1px;background:#e0dde0"></div>
<div class="t" style="left:16px;top:315.19px;line-height:20px;font-size:11px;font-weight:normal;color:#000;">Soz. Abgaben</div>
<div style="left:116px;top:271px;width:1333px;height:66px;background:#fff"></div>
<div style="left:1340px;top:272px;width:108px;height:64px;background-color:#fcf8fc;background-image:repeating-conic-gradient(#f4f1f4 0 25%,#fdf8fd 0 50%);background-size:2px 2px;"></div>
<div style="left:117px;top:314px;width:1223px;height:1px;background-image:repeating-linear-gradient(90deg,#cfcfcf 0 1px,transparent 1px 2px)"></div>
<div style="left:217px;top:293px;width:1px;height:43px;background-image:repeating-linear-gradient(180deg,#cfcfcf 0 1px,transparent 1px 2px)"></div>
<div style="left:319px;top:293px;width:1px;height:43px;background-image:repeating-linear-gradient(180deg,#cfcfcf 0 1px,transparent 1px 2px)"></div>
<div style="left:421px;top:293px;width:1px;height:43px;background-image:repeating-linear-gradient(180deg,#cfcfcf 0 1px,transparent 1px 2px)"></div>
<div style="left:523px;top:293px;width:1px;height:43px;background-image:repeating-linear-gradient(180deg,#cfcfcf 0 1px,transparent 1px 2px)"></div>
<div style="left:625px;top:293px;width:1px;height:43px;background-image:repeating-linear-gradient(180deg,#cfcfcf 0 1px,transparent 1px 2px)"></div>
<div style="left:727px;top:293px;width:1px;height:43px;background-image:repeating-linear-gradient(180deg,#cfcfcf 0 1px,transparent 1px 2px)"></div>
<div style="left:829px;top:293px;width:1px;height:43px;background-image:repeating-linear-gradient(180deg,#cfcfcf 0 1px,transparent 1px 2px)"></div>
<div style="left:931px;top:293px;width:1px;height:43px;background-image:repeating-linear-gradient(180deg,#cfcfcf 0 1px,transparent 1px 2px)"></div>
<div style="left:1033px;top:293px;width:1px;height:43px;background-image:repeating-linear-gradient(180deg,#cfcfcf 0 1px,transparent 1px 2px)"></div>
<div style="left:1135px;top:293px;width:1px;height:43px;background-image:repeating-linear-gradient(180deg,#cfcfcf 0 1px,transparent 1px 2px)"></div>
<div style="left:1237px;top:293px;width:1px;height:43px;background-image:repeating-linear-gradient(180deg,#cfcfcf 0 1px,transparent 1px 2px)"></div>
<div style="left:1339px;top:293px;width:1px;height:43px;background-image:repeating-linear-gradient(180deg,#cfcfcf 0 1px,transparent 1px 2px)"></div>
<div style="left:117px;top:272px;width:101px;height:20px;background:#817e81"></div>
<div class="t" style="left:116px;width:102px;text-align:center;top:271.19px;line-height:20px;font-size:11px;font-weight:normal;color:#f2f2f2;">Januar</div>
<div style="left:218px;top:272px;width:102px;height:20px;background:#817e81"></div>
<div class="t" style="left:218px;width:102px;text-align:center;top:271.19px;line-height:20px;font-size:11px;font-weight:normal;color:#f2f2f2;">Februar</div>
<div style="left:320px;top:272px;width:102px;height:20px;background:#817e81"></div>
<div class="t" style="left:320px;width:102px;text-align:center;top:271.19px;line-height:20px;font-size:11px;font-weight:normal;color:#f2f2f2;">M&auml;rz</div>
<div style="left:422px;top:272px;width:102px;height:20px;background:#817e81"></div>
<div class="t" style="left:422px;width:102px;text-align:center;top:271.19px;line-height:20px;font-size:11px;font-weight:normal;color:#f2f2f2;">April</div>
<div style="left:524px;top:272px;width:102px;height:20px;background:#817e81"></div>
<div class="t" style="left:524px;width:102px;text-align:center;top:271.19px;line-height:20px;font-size:11px;font-weight:normal;color:#f2f2f2;">Mai</div>
<div style="left:626px;top:272px;width:102px;height:20px;background:#817e81"></div>
<div class="t" style="left:626px;width:102px;text-align:center;top:271.19px;line-height:20px;font-size:11px;font-weight:normal;color:#f2f2f2;">Juni</div>
<div style="left:728px;top:272px;width:102px;height:20px;background:#817e81"></div>
<div class="t" style="left:728px;width:102px;text-align:center;top:271.19px;line-height:20px;font-size:11px;font-weight:normal;color:#f2f2f2;">Juli</div>
<div style="left:830px;top:272px;width:102px;height:20px;background:#817e81"></div>
<div class="t" style="left:830px;width:102px;text-align:center;top:271.19px;line-height:20px;font-size:11px;font-weight:normal;color:#f2f2f2;">August</div>
<div style="left:932px;top:272px;width:102px;height:20px;background:#817e81"></div>
<div class="t" style="left:932px;width:102px;text-align:center;top:271.19px;line-height:20px;font-size:11px;font-weight:normal;color:#f2f2f2;">September</div>
<div style="left:1034px;top:272px;width:102px;height:20px;background:#817e81"></div>
<div class="t" style="left:1034px;width:102px;text-align:center;top:271.19px;line-height:20px;font-size:11px;font-weight:normal;color:#f2f2f2;">Oktober</div>
<div style="left:1136px;top:272px;width:102px;height:20px;background:#ff0000"></div>
<div class="t" style="left:1136px;width:102px;text-align:center;top:271.19px;line-height:20px;font-size:11px;font-weight:normal;color:#ffffff;">November</div>
<div style="left:1238px;top:272px;width:102px;height:20px;background:#ff0000"></div>
<div class="t" style="left:1238px;width:102px;text-align:center;top:271.19px;line-height:20px;font-size:11px;font-weight:normal;color:#ffffff;">Dezember</div>
<div style="left:217px;top:272px;width:1px;height:20px;background:#6e6b6e"></div>
<div style="left:319px;top:272px;width:1px;height:20px;background:#6e6b6e"></div>
<div style="left:421px;top:272px;width:1px;height:20px;background:#6e6b6e"></div>
<div style="left:523px;top:272px;width:1px;height:20px;background:#6e6b6e"></div>
<div style="left:625px;top:272px;width:1px;height:20px;background:#6e6b6e"></div>
<div style="left:727px;top:272px;width:1px;height:20px;background:#6e6b6e"></div>
<div style="left:829px;top:272px;width:1px;height:20px;background:#6e6b6e"></div>
<div style="left:931px;top:272px;width:1px;height:20px;background:#6e6b6e"></div>
<div style="left:1033px;top:272px;width:1px;height:20px;background:#6e6b6e"></div>
<div style="left:1135px;top:272px;width:1px;height:20px;background:#6e6b6e"></div>
<div style="left:1237px;top:272px;width:1px;height:20px;background:#6e6b6e"></div>
<div style="left:117px;top:292px;width:1223px;height:1px;background:#6e6b6e"></div>
<div class="t" style="left:116px;width:80px;text-align:right;top:293.19px;line-height:20px;font-size:11px;font-weight:normal;color:#000;">9.125,00</div>
<div class="t" style="left:116px;width:80px;text-align:right;top:315.19px;line-height:20px;font-size:11px;font-weight:normal;color:#000;">13.400,00</div>
<div class="t" style="left:218px;width:80px;text-align:right;top:293.19px;line-height:20px;font-size:11px;font-weight:normal;color:#000;">9.125,00</div>
<div class="t" style="left:218px;width:80px;text-align:right;top:315.19px;line-height:20px;font-size:11px;font-weight:normal;color:#000;">13.400,00</div>
<div class="t" style="left:320px;width:80px;text-align:right;top:293.19px;line-height:20px;font-size:11px;font-weight:normal;color:#000;">9.125,00</div>
<div class="t" style="left:320px;width:80px;text-align:right;top:315.19px;line-height:20px;font-size:11px;font-weight:normal;color:#000;">14.100,00</div>
<div class="t" style="left:422px;width:80px;text-align:right;top:293.19px;line-height:20px;font-size:11px;font-weight:normal;color:#000;">9.125,00</div>
<div class="t" style="left:422px;width:80px;text-align:right;top:315.19px;line-height:20px;font-size:11px;font-weight:normal;color:#000;">13.400,00</div>
<div class="t" style="left:524px;width:80px;text-align:right;top:293.19px;line-height:20px;font-size:11px;font-weight:normal;color:#000;">9.125,00</div>
<div class="t" style="left:524px;width:80px;text-align:right;top:315.19px;line-height:20px;font-size:11px;font-weight:normal;color:#000;">13.400,00</div>
<div class="t" style="left:626px;width:80px;text-align:right;top:293.19px;line-height:20px;font-size:11px;font-weight:normal;color:#000;">9.125,00</div>
<svg style="position:absolute;left:714px;top:296px;" width="8" height="14" viewBox="0 0 8 14"><path d="M0.5,3.5 V11 Q0.5,13.5 3.5,13.5 Q6.5,13.5 6.5,11 V2.5 Q6.5,0.5 4.5,0.5 Q2.5,0.5 2.5,2.5 V11 Q2.5,12 3.5,12 Q4.5,12 4.5,11 V3.5" fill="none" stroke="#3c5274" stroke-width="1"/></svg>
<div class="t" style="left:626px;width:80px;text-align:right;top:315.19px;line-height:20px;font-size:11px;font-weight:normal;color:#000;">13.400,00</div>
<svg style="position:absolute;left:714px;top:318px;" width="8" height="14" viewBox="0 0 8 14"><path d="M0.5,3.5 V11 Q0.5,13.5 3.5,13.5 Q6.5,13.5 6.5,11 V2.5 Q6.5,0.5 4.5,0.5 Q2.5,0.5 2.5,2.5 V11 Q2.5,12 3.5,12 Q4.5,12 4.5,11 V3.5" fill="none" stroke="#3c5274" stroke-width="1"/></svg>
<div class="t" style="left:728px;width:80px;text-align:right;top:293.19px;line-height:20px;font-size:11px;font-weight:normal;color:#000;">9.125,00</div>
<svg style="position:absolute;left:816px;top:296px;" width="8" height="14" viewBox="0 0 8 14"><path d="M0.5,3.5 V11 Q0.5,13.5 3.5,13.5 Q6.5,13.5 6.5,11 V2.5 Q6.5,0.5 4.5,0.5 Q2.5,0.5 2.5,2.5 V11 Q2.5,12 3.5,12 Q4.5,12 4.5,11 V3.5" fill="none" stroke="#3c5274" stroke-width="1"/></svg>
<div class="t" style="left:728px;width:80px;text-align:right;top:315.19px;line-height:20px;font-size:11px;font-weight:normal;color:#000;">13.400,00</div>
<svg style="position:absolute;left:816px;top:318px;" width="8" height="14" viewBox="0 0 8 14"><path d="M0.5,3.5 V11 Q0.5,13.5 3.5,13.5 Q6.5,13.5 6.5,11 V2.5 Q6.5,0.5 4.5,0.5 Q2.5,0.5 2.5,2.5 V11 Q2.5,12 3.5,12 Q4.5,12 4.5,11 V3.5" fill="none" stroke="#3c5274" stroke-width="1"/></svg>
<div class="t" style="left:830px;width:80px;text-align:right;top:293.19px;line-height:20px;font-size:11px;font-weight:normal;color:#000;">9.125,00</div>
<svg style="position:absolute;left:918px;top:296px;" width="8" height="14" viewBox="0 0 8 14"><path d="M0.5,3.5 V11 Q0.5,13.5 3.5,13.5 Q6.5,13.5 6.5,11 V2.5 Q6.5,0.5 4.5,0.5 Q2.5,0.5 2.5,2.5 V11 Q2.5,12 3.5,12 Q4.5,12 4.5,11 V3.5" fill="none" stroke="#3c5274" stroke-width="1"/></svg>
<div class="t" style="left:830px;width:80px;text-align:right;top:315.19px;line-height:20px;font-size:11px;font-weight:normal;color:#000;">13.400,00</div>
<svg style="position:absolute;left:918px;top:318px;" width="8" height="14" viewBox="0 0 8 14"><path d="M0.5,3.5 V11 Q0.5,13.5 3.5,13.5 Q6.5,13.5 6.5,11 V2.5 Q6.5,0.5 4.5,0.5 Q2.5,0.5 2.5,2.5 V11 Q2.5,12 3.5,12 Q4.5,12 4.5,11 V3.5" fill="none" stroke="#3c5274" stroke-width="1"/></svg>
<div class="t" style="left:932px;width:80px;text-align:right;top:293.19px;line-height:20px;font-size:11px;font-weight:normal;color:#000;">9.125,00</div>
<svg style="position:absolute;left:1020px;top:296px;" width="8" height="14" viewBox="0 0 8 14"><path d="M0.5,3.5 V11 Q0.5,13.5 3.5,13.5 Q6.5,13.5 6.5,11 V2.5 Q6.5,0.5 4.5,0.5 Q2.5,0.5 2.5,2.5 V11 Q2.5,12 3.5,12 Q4.5,12 4.5,11 V3.5" fill="none" stroke="#3c5274" stroke-width="1"/></svg>
<div class="t" style="left:932px;width:80px;text-align:right;top:315.19px;line-height:20px;font-size:11px;font-weight:normal;color:#000;">13.400,00</div>
<svg style="position:absolute;left:1020px;top:318px;" width="8" height="14" viewBox="0 0 8 14"><path d="M0.5,3.5 V11 Q0.5,13.5 3.5,13.5 Q6.5,13.5 6.5,11 V2.5 Q6.5,0.5 4.5,0.5 Q2.5,0.5 2.5,2.5 V11 Q2.5,12 3.5,12 Q4.5,12 4.5,11 V3.5" fill="none" stroke="#3c5274" stroke-width="1"/></svg>
<svg style="position:absolute;left:1122px;top:296px;" width="8" height="14" viewBox="0 0 8 14"><path d="M0.5,3.5 V11 Q0.5,13.5 3.5,13.5 Q6.5,13.5 6.5,11 V2.5 Q6.5,0.5 4.5,0.5 Q2.5,0.5 2.5,2.5 V11 Q2.5,12 3.5,12 Q4.5,12 4.5,11 V3.5" fill="none" stroke="#3c5274" stroke-width="1"/></svg>
<svg style="position:absolute;left:1122px;top:318px;" width="8" height="14" viewBox="0 0 8 14"><path d="M0.5,3.5 V11 Q0.5,13.5 3.5,13.5 Q6.5,13.5 6.5,11 V2.5 Q6.5,0.5 4.5,0.5 Q2.5,0.5 2.5,2.5 V11 Q2.5,12 3.5,12 Q4.5,12 4.5,11 V3.5" fill="none" stroke="#3c5274" stroke-width="1"/></svg>
<div style="left:90px;top:346px;width:23px;height:20px;background:#fff;border:2px solid #000"></div>
<svg style="position:absolute;left:93px;top:350px;" width="18" height="14" viewBox="0 0 18 14"><defs><linearGradient id="la93_349" x1="0" y1="0" x2="0" y2="1"><stop offset="0" stop-color="#8ed8ff"/><stop offset="1" stop-color="#2a96e6"/></linearGradient></defs><path d="M1.2,6.4 L7.5,0.5 L7.5,4.3 L15.7,4.3 Q17,4.3 17,6.5 Q17,8.7 15.7,8.7 L7.5,8.7 L7.5,12.4 Z" fill="url(#la93_349)" stroke="#1c6cc0" stroke-width="1.1"/></svg>
<div style="left:116px;top:346px;width:101px;height:20px;background:#817e81;border:1px solid #000;box-shadow:inset 0 0 0 1px #8e8b8e"></div>
<svg style="position:absolute;left:118px;top:349px;" width="6" height="14" viewBox="0 0 6 14"><path d="M0,1.6 L4.8,6.3 L0,11 Z" fill="#fff"/></svg>
<svg style="position:absolute;left:210px;top:349px;" width="6" height="14" viewBox="0 0 6 14"><path d="M5,1.6 L0.2,6.3 L5,11 Z" fill="#fff"/></svg>
<div class="t" style="left:115px;width:101px;text-align:center;top:347.19px;line-height:20px;font-size:11px;font-weight:bold;color:#f4f4f4;">2013</div>
<div style="left:218px;top:346px;width:101px;height:20px;background:#817e81;border:1px solid #000;box-shadow:inset 0 0 0 1px #8e8b8e"></div>
<div class="t" style="left:217px;width:101px;text-align:center;top:347.19px;line-height:20px;font-size:11px;font-weight:normal;color:#f4f4f4;">2014</div>
<div style="left:320px;top:346px;width:102px;height:20px;background:#0099ff;border:1px solid #000"></div>
<div class="t" style="left:319px;width:102px;text-align:center;top:347.19px;line-height:20px;font-size:11px;font-weight:normal;color:#ffffff;">2015</div>
<div style="left:425px;top:346px;width:23px;height:20px;background:#fff;border:1px solid #000"></div>
<svg style="position:absolute;left:428px;top:350px;" width="18" height="14" viewBox="0 0 18 14"><defs><linearGradient id="ra428_349" x1="0" y1="0" x2="0" y2="1"><stop offset="0" stop-color="#8ed8ff"/><stop offset="1" stop-color="#2a96e6"/></linearGradient></defs><path d="M16.8,6.4 L10.5,0.5 L10.5,4.3 L2.3,4.3 Q1,4.3 1,6.5 Q1,8.7 2.3,8.7 L10.5,8.7 L10.5,12.4 Z" fill="url(#ra428_349)" stroke="#1c6cc0" stroke-width="1.1"/></svg>
<div style="left:13px;top:369px;width:100px;height:154px;background:#fff;border:1px solid #000"></div>
<div style="left:14px;top:370px;width:98px;height:20px;background:#c8c5fb;box-shadow:inset -1px -1px 0 #dcdafe"></div>
<div style="left:14px;top:390px;width:98px;height:1px;background:#000"></div>
<div class="t" style="left:16px;top:369.19px;line-height:20px;font-size:11px;font-weight:bold;color:#000;">ABSCHLUSS</div>
<div class="t" style="left:16px;top:391.19px;line-height:20px;font-size:11px;font-weight:normal;color:#000;">Erstellung</div>
<div style="left:14px;top:412px;width:98px;height:1px;background:#e0dde0"></div>
<div class="t" style="left:16px;top:413.19px;line-height:20px;font-size:11px;font-weight:normal;color:#000;">Freigabebrief</div>
<div style="left:14px;top:434px;width:98px;height:1px;background:#e0dde0"></div>
<div class="t" style="left:16px;top:435.19px;line-height:20px;font-size:11px;font-weight:normal;color:#000;">Versandfreigabe</div>
<div style="left:14px;top:456px;width:98px;height:1px;background:#e0dde0"></div>
<div class="t" style="left:16px;top:457.19px;line-height:20px;font-size:11px;font-weight:normal;color:#000;">Elster-Versand</div>
<div style="left:14px;top:478px;width:98px;height:1px;background:#e0dde0"></div>
<div class="t" style="left:16px;top:479.19px;line-height:20px;font-size:11px;font-weight:normal;color:#000;">B-R&uuml;ck Elektr.</div>
<div style="left:14px;top:500px;width:98px;height:1px;background:#e0dde0"></div>
<div class="t" style="left:16px;top:501.19px;line-height:20px;font-size:11px;font-weight:normal;color:#000;">B-R&uuml;ck Post</div>
<div style="left:116px;top:369px;width:1333px;height:154px;background:#fff"></div>
<div style="left:117px;top:457px;width:101px;height:21px;background-color:#fcf8fc;background-image:repeating-conic-gradient(#f4f1f4 0 25%,#fdf8fd 0 50%);background-size:2px 2px;"></div>
<div style="left:117px;top:479px;width:101px;height:21px;background-color:#fcf8fc;background-image:repeating-conic-gradient(#f4f1f4 0 25%,#fdf8fd 0 50%);background-size:2px 2px;"></div>
<div style="left:117px;top:501px;width:101px;height:21px;background-color:#fcf8fc;background-image:repeating-conic-gradient(#f4f1f4 0 25%,#fdf8fd 0 50%);background-size:2px 2px;"></div>
<div style="left:218px;top:457px;width:102px;height:21px;background-color:#fcf8fc;background-image:repeating-conic-gradient(#f4f1f4 0 25%,#fdf8fd 0 50%);background-size:2px 2px;"></div>
<div style="left:218px;top:479px;width:102px;height:21px;background-color:#fcf8fc;background-image:repeating-conic-gradient(#f4f1f4 0 25%,#fdf8fd 0 50%);background-size:2px 2px;"></div>
<div style="left:218px;top:501px;width:102px;height:21px;background-color:#fcf8fc;background-image:repeating-conic-gradient(#f4f1f4 0 25%,#fdf8fd 0 50%);background-size:2px 2px;"></div>
<div style="left:320px;top:479px;width:102px;height:21px;background-color:#fcf8fc;background-image:repeating-conic-gradient(#f4f1f4 0 25%,#fdf8fd 0 50%);background-size:2px 2px;"></div>
<div style="left:320px;top:501px;width:102px;height:21px;background-color:#fcf8fc;background-image:repeating-conic-gradient(#f4f1f4 0 25%,#fdf8fd 0 50%);background-size:2px 2px;"></div>
<div style="left:422px;top:479px;width:102px;height:21px;background-color:#fcf8fc;background-image:repeating-conic-gradient(#f4f1f4 0 25%,#fdf8fd 0 50%);background-size:2px 2px;"></div>
<div style="left:524px;top:479px;width:102px;height:21px;background-color:#fcf8fc;background-image:repeating-conic-gradient(#f4f1f4 0 25%,#fdf8fd 0 50%);background-size:2px 2px;"></div>
<div style="left:626px;top:479px;width:102px;height:21px;background-color:#fcf8fc;background-image:repeating-conic-gradient(#f4f1f4 0 25%,#fdf8fd 0 50%);background-size:2px 2px;"></div>
<div style="left:728px;top:479px;width:102px;height:21px;background-color:#fcf8fc;background-image:repeating-conic-gradient(#f4f1f4 0 25%,#fdf8fd 0 50%);background-size:2px 2px;"></div>
<div style="left:830px;top:479px;width:102px;height:21px;background-color:#fcf8fc;background-image:repeating-conic-gradient(#f4f1f4 0 25%,#fdf8fd 0 50%);background-size:2px 2px;"></div>
<div style="left:830px;top:501px;width:102px;height:21px;background-color:#fcf8fc;background-image:repeating-conic-gradient(#f4f1f4 0 25%,#fdf8fd 0 50%);background-size:2px 2px;"></div>
<div style="left:932px;top:479px;width:102px;height:21px;background-color:#fcf8fc;background-image:repeating-conic-gradient(#f4f1f4 0 25%,#fdf8fd 0 50%);background-size:2px 2px;"></div>
<div style="left:932px;top:501px;width:102px;height:21px;background-color:#fcf8fc;background-image:repeating-conic-gradient(#f4f1f4 0 25%,#fdf8fd 0 50%);background-size:2px 2px;"></div>
<div style="left:1034px;top:479px;width:102px;height:21px;background-color:#fcf8fc;background-image:repeating-conic-gradient(#f4f1f4 0 25%,#fdf8fd 0 50%);background-size:2px 2px;"></div>
<div style="left:1034px;top:501px;width:102px;height:21px;background-color:#fcf8fc;background-image:repeating-conic-gradient(#f4f1f4 0 25%,#fdf8fd 0 50%);background-size:2px 2px;"></div>
<div style="left:1136px;top:370px;width:312px;height:152px;background-color:#fcf8fc;background-image:repeating-conic-gradient(#f4f1f4 0 25%,#fdf8fd 0 50%);background-size:2px 2px;"></div>
<div style="left:117px;top:412px;width:1019px;height:1px;background-image:repeating-linear-gradient(90deg,#cfcfcf 0 1px,transparent 1px 2px)"></div>
<div style="left:117px;top:434px;width:1019px;height:1px;background-image:repeating-linear-gradient(90deg,#cfcfcf 0 1px,transparent 1px 2px)"></div>
<div style="left:117px;top:456px;width:1019px;height:1px;background-image:repeating-linear-gradient(90deg,#cfcfcf 0 1px,transparent 1px 2px)"></div>
<div style="left:117px;top:478px;width:1019px;height:1px;background-image:repeating-linear-gradient(90deg,#cfcfcf 0 1px,transparent 1px 2px)"></div>
<div style="left:117px;top:500px;width:1019px;height:1px;background-image:repeating-linear-gradient(90deg,#cfcfcf 0 1px,transparent 1px 2px)"></div>
<div style="left:217px;top:391px;width:1px;height:131px;background-image:repeating-linear-gradient(180deg,#cfcfcf 0 1px,transparent 1px 2px)"></div>
<div style="left:319px;top:391px;width:1px;height:131px;background-image:repeating-linear-gradient(180deg,#cfcfcf 0 1px,transparent 1px 2px)"></div>
<div style="left:421px;top:391px;width:1px;height:131px;background-image:repeating-linear-gradient(180deg,#cfcfcf 0 1px,transparent 1px 2px)"></div>
<div style="left:523px;top:391px;width:1px;height:131px;background-image:repeating-linear-gradient(180deg,#cfcfcf 0 1px,transparent 1px 2px)"></div>
<div style="left:625px;top:391px;width:1px;height:131px;background-image:repeating-linear-gradient(180deg,#cfcfcf 0 1px,transparent 1px 2px)"></div>
<div style="left:727px;top:391px;width:1px;height:131px;background-image:repeating-linear-gradient(180deg,#cfcfcf 0 1px,transparent 1px 2px)"></div>
<div style="left:829px;top:391px;width:1px;height:131px;background-image:repeating-linear-gradient(180deg,#cfcfcf 0 1px,transparent 1px 2px)"></div>
<div style="left:931px;top:391px;width:1px;height:131px;background-image:repeating-linear-gradient(180deg,#cfcfcf 0 1px,transparent 1px 2px)"></div>
<div style="left:1033px;top:391px;width:1px;height:131px;background-image:repeating-linear-gradient(180deg,#cfcfcf 0 1px,transparent 1px 2px)"></div>
<div style="left:1135px;top:391px;width:1px;height:131px;background-image:repeating-linear-gradient(180deg,#cfcfcf 0 1px,transparent 1px 2px)"></div>
<div class="t" style="left:116px;width:102px;text-align:center;top:369.19px;line-height:20px;font-size:11px;font-weight:normal;color:#000;">Bilanz</div>
<div style="left:217px;top:370px;width:1px;height:21px;background:#7a7a7a"></div>
<div class="t" style="left:218px;width:102px;text-align:center;top:369.19px;line-height:20px;font-size:11px;font-weight:normal;color:#000;">Bericht</div>
<div style="left:319px;top:370px;width:1px;height:21px;background:#7a7a7a"></div>
<div class="t" style="left:320px;width:102px;text-align:center;top:369.19px;line-height:20px;font-size:11px;font-weight:normal;color:#000;">E-Bilanz</div>
<div style="left:421px;top:370px;width:1px;height:21px;background:#7a7a7a"></div>
<div class="t" style="left:422px;width:102px;text-align:center;top:369.19px;line-height:20px;font-size:11px;font-weight:normal;color:#000;">GewSt</div>
<div style="left:523px;top:370px;width:1px;height:21px;background:#7a7a7a"></div>
<div class="t" style="left:524px;width:102px;text-align:center;top:369.19px;line-height:20px;font-size:11px;font-weight:normal;color:#000;">KSt</div>
<div style="left:625px;top:370px;width:1px;height:21px;background:#7a7a7a"></div>
<div class="t" style="left:626px;width:102px;text-align:center;top:369.19px;line-height:20px;font-size:11px;font-weight:normal;color:#000;">USt</div>
<div style="left:727px;top:370px;width:1px;height:21px;background:#7a7a7a"></div>
<div class="t" style="left:728px;width:102px;text-align:center;top:369.19px;line-height:20px;font-size:11px;font-weight:normal;color:#000;">FSt</div>
<div style="left:829px;top:370px;width:1px;height:21px;background:#7a7a7a"></div>
<div class="t" style="left:830px;width:102px;text-align:center;top:369.19px;line-height:20px;font-size:11px;font-weight:normal;color:#000;">KAP</div>
<div style="left:931px;top:370px;width:1px;height:21px;background:#7a7a7a"></div>
<div class="t" style="left:932px;width:102px;text-align:center;top:369.19px;line-height:20px;font-size:11px;font-weight:normal;color:#000;">Bundesanzeiger</div>
<div style="left:1033px;top:370px;width:1px;height:21px;background:#7a7a7a"></div>
<div class="t" style="left:1034px;width:102px;text-align:center;top:369.19px;line-height:20px;font-size:11px;font-weight:normal;color:#000;">E&Uuml;R</div>
<div style="left:1135px;top:370px;width:1px;height:21px;background:#7a7a7a"></div>
<div style="left:117px;top:390px;width:1019px;height:1px;background:#6e6e6e"></div>
<div class="t" style="left:118px;width:102px;text-align:center;top:391.19px;line-height:20px;font-size:11px;font-weight:normal;color:#000;">02.09.2015</div>
<div class="t" style="left:322px;width:102px;text-align:center;top:391.19px;line-height:20px;font-size:11px;font-weight:normal;color:#000;">17.11.2015</div>
<div class="t" style="left:422px;width:80px;text-align:right;top:391.19px;line-height:20px;font-size:11px;font-weight:normal;color:#000;">20.09.2014</div>
<svg style="position:absolute;left:510px;top:394px;" width="8" height="14" viewBox="0 0 8 14"><path d="M0.5,3.5 V11 Q0.5,13.5 3.5,13.5 Q6.5,13.5 6.5,11 V2.5 Q6.5,0.5 4.5,0.5 Q2.5,0.5 2.5,2.5 V11 Q2.5,12 3.5,12 Q4.5,12 4.5,11 V3.5" fill="none" stroke="#3c5274" stroke-width="1"/></svg>
<div class="t" style="left:422px;width:80px;text-align:right;top:413.19px;line-height:20px;font-size:11px;font-weight:normal;color:#000;">20.09.2014</div>
<svg style="position:absolute;left:510px;top:416px;" width="8" height="14" viewBox="0 0 8 14"><path d="M0.5,3.5 V11 Q0.5,13.5 3.5,13.5 Q6.5,13.5 6.5,11 V2.5 Q6.5,0.5 4.5,0.5 Q2.5,0.5 2.5,2.5 V11 Q2.5,12 3.5,12 Q4.5,12 4.5,11 V3.5" fill="none" stroke="#3c5274" stroke-width="1"/></svg>
<div class="t" style="left:422px;width:80px;text-align:right;top:435.19px;line-height:20px;font-size:11px;font-weight:normal;color:#000;">22.09.2014</div>
<svg style="position:absolute;left:510px;top:438px;" width="8" height="14" viewBox="0 0 8 14"><path d="M0.5,3.5 V11 Q0.5,13.5 3.5,13.5 Q6.5,13.5 6.5,11 V2.5 Q6.5,0.5 4.5,0.5 Q2.5,0.5 2.5,2.5 V11 Q2.5,12 3.5,12 Q4.5,12 4.5,11 V3.5" fill="none" stroke="#3c5274" stroke-width="1"/></svg>
<div class="t" style="left:422px;width:80px;text-align:right;top:457.19px;line-height:20px;font-size:11px;font-weight:normal;color:#000;">22.09.2014</div>
<svg style="position:absolute;left:510px;top:460px;" width="8" height="14" viewBox="0 0 8 14"><path d="M0.5,3.5 V11 Q0.5,13.5 3.5,13.5 Q6.5,13.5 6.5,11 V2.5 Q6.5,0.5 4.5,0.5 Q2.5,0.5 2.5,2.5 V11 Q2.5,12 3.5,12 Q4.5,12 4.5,11 V3.5" fill="none" stroke="#3c5274" stroke-width="1"/></svg>
<div class="t" style="left:626px;width:80px;text-align:right;top:391.19px;line-height:20px;font-size:11px;font-weight:normal;color:#000;">20.09.2014</div>
<svg style="position:absolute;left:714px;top:394px;" width="8" height="14" viewBox="0 0 8 14"><path d="M0.5,3.5 V11 Q0.5,13.5 3.5,13.5 Q6.5,13.5 6.5,11 V2.5 Q6.5,0.5 4.5,0.5 Q2.5,0.5 2.5,2.5 V11 Q2.5,12 3.5,12 Q4.5,12 4.5,11 V3.5" fill="none" stroke="#3c5274" stroke-width="1"/></svg>
<div class="t" style="left:626px;width:80px;text-align:right;top:413.19px;line-height:20px;font-size:11px;font-weight:normal;color:#000;">21.09.2014</div>
<svg style="position:absolute;left:714px;top:416px;" width="8" height="14" viewBox="0 0 8 14"><path d="M0.5,3.5 V11 Q0.5,13.5 3.5,13.5 Q6.5,13.5 6.5,11 V2.5 Q6.5,0.5 4.5,0.5 Q2.5,0.5 2.5,2.5 V11 Q2.5,12 3.5,12 Q4.5,12 4.5,11 V3.5" fill="none" stroke="#3c5274" stroke-width="1"/></svg>
<div class="t" style="left:626px;width:80px;text-align:right;top:435.19px;line-height:20px;font-size:11px;font-weight:normal;color:#000;">22.09.2014</div>
<svg style="position:absolute;left:714px;top:438px;" width="8" height="14" viewBox="0 0 8 14"><path d="M0.5,3.5 V11 Q0.5,13.5 3.5,13.5 Q6.5,13.5 6.5,11 V2.5 Q6.5,0.5 4.5,0.5 Q2.5,0.5 2.5,2.5 V11 Q2.5,12 3.5,12 Q4.5,12 4.5,11 V3.5" fill="none" stroke="#3c5274" stroke-width="1"/></svg>
<div class="t" style="left:626px;width:80px;text-align:right;top:457.19px;line-height:20px;font-size:11px;font-weight:normal;color:#000;">22.09.2014</div>
<svg style="position:absolute;left:714px;top:460px;" width="8" height="14" viewBox="0 0 8 14"><path d="M0.5,3.5 V11 Q0.5,13.5 3.5,13.5 Q6.5,13.5 6.5,11 V2.5 Q6.5,0.5 4.5,0.5 Q2.5,0.5 2.5,2.5 V11 Q2.5,12 3.5,12 Q4.5,12 4.5,11 V3.5" fill="none" stroke="#3c5274" stroke-width="1"/></svg>
<div style="left:13px;top:532px;width:100px;height:198px;background:#fff;border:1px solid #000"></div>
<div style="left:14px;top:533px;width:98px;height:20px;background:#c8c5fb;box-shadow:inset -1px -1px 0 #dcdafe"></div>
<div style="left:14px;top:553px;width:98px;height:1px;background:#000"></div>
<div class="t" style="left:16px;top:532.19px;line-height:20px;font-size:11px;font-weight:bold;color:#000;">EST</div>
<div class="t" style="left:16px;top:554.19px;line-height:20px;font-size:11px;font-weight:normal;color:#000;">NZ/Erst.</div>
<div style="left:14px;top:575px;width:98px;height:1px;background:#e0dde0"></div>
<div class="t" style="left:16px;top:576.19px;line-height:20px;font-size:11px;font-weight:normal;color:#000;">Erstellung</div>
<div style="left:14px;top:597px;width:98px;height:1px;background:#e0dde0"></div>
<div class="t" style="left:16px;top:598.19px;line-height:20px;font-size:11px;font-weight:normal;color:#000;">Freigabebrief</div>
<div style="left:14px;top:619px;width:98px;height:1px;background:#e0dde0"></div>
<div class="t" style="left:16px;top:620.19px;line-height:20px;font-size:11px;font-weight:normal;color:#000;">Versandfreigabe</div>
<div style="left:14px;top:641px;width:98px;height:1px;background:#e0dde0"></div>
<div class="t" style="left:16px;top:642.19px;line-height:20px;font-size:11px;font-weight:normal;color:#000;">Elster-Versand</div>
<div style="left:14px;top:663px;width:98px;height:1px;background:#e0dde0"></div>
<div class="t" style="left:16px;top:664.19px;line-height:20px;font-size:11px;font-weight:normal;color:#000;">B-R&uuml;ck Elektr.</div>
<div style="left:14px;top:685px;width:98px;height:1px;background:#e0dde0"></div>
<div class="t" style="left:16px;top:686.19px;line-height:20px;font-size:11px;font-weight:normal;color:#000;">B-R&uuml;ck Post</div>
<div style="left:14px;top:707px;width:98px;height:1px;background:#e0dde0"></div>
<div class="t" style="left:16px;top:708.19px;line-height:20px;font-size:11px;font-weight:normal;color:#000;">Lohnst. Erm.</div>
<div style="left:116px;top:532px;width:510px;height:198px;background:#fff"></div>
<div style="left:117px;top:575px;width:509px;height:1px;background-image:repeating-linear-gradient(90deg,#cfcfcf 0 1px,transparent 1px 2px)"></div>
<div style="left:117px;top:597px;width:509px;height:1px;background-image:repeating-linear-gradient(90deg,#cfcfcf 0 1px,transparent 1px 2px)"></div>
<div style="left:117px;top:619px;width:509px;height:1px;background-image:repeating-linear-gradient(90deg,#cfcfcf 0 1px,transparent 1px 2px)"></div>
<div style="left:117px;top:641px;width:509px;height:1px;background-image:repeating-linear-gradient(90deg,#cfcfcf 0 1px,transparent 1px 2px)"></div>
<div style="left:117px;top:663px;width:509px;height:1px;background-image:repeating-linear-gradient(90deg,#cfcfcf 0 1px,transparent 1px 2px)"></div>
<div style="left:117px;top:685px;width:509px;height:1px;background-image:repeating-linear-gradient(90deg,#cfcfcf 0 1px,transparent 1px 2px)"></div>
<div style="left:117px;top:707px;width:509px;height:1px;background-image:repeating-linear-gradient(90deg,#cfcfcf 0 1px,transparent 1px 2px)"></div>
<div style="left:217px;top:554px;width:1px;height:175px;background-image:repeating-linear-gradient(180deg,#cfcfcf 0 1px,transparent 1px 2px)"></div>
<div style="left:319px;top:554px;width:1px;height:175px;background-image:repeating-linear-gradient(180deg,#cfcfcf 0 1px,transparent 1px 2px)"></div>
<div style="left:421px;top:554px;width:1px;height:175px;background-image:repeating-linear-gradient(180deg,#cfcfcf 0 1px,transparent 1px 2px)"></div>
<div style="left:523px;top:554px;width:1px;height:175px;background-image:repeating-linear-gradient(180deg,#cfcfcf 0 1px,transparent 1px 2px)"></div>
<div style="left:139px;top:533px;width:181px;height:20px;background:#817e81"></div>
<div style="left:217px;top:533px;width:1px;height:20px;background:#6e6b6e"></div>
<div style="left:320px;top:533px;width:101px;height:20px;background-color:#d6d4d6;background-image:repeating-conic-gradient(#d1cfd1 0 25%,#d7d5d7 0 50%);background-size:2px 2px;box-shadow:inset 1px 1px 0 #e4e2e4"></div>
<div style="left:422px;top:533px;width:101px;height:20px;background-color:#d6d4d6;background-image:repeating-conic-gradient(#d1cfd1 0 25%,#d7d5d7 0 50%);background-size:2px 2px;box-shadow:inset 1px 1px 0 #e4e2e4"></div>
<div style="left:524px;top:533px;width:79px;height:20px;background-color:#d6d4d6;background-image:repeating-conic-gradient(#d1cfd1 0 25%,#d7d5d7 0 50%);background-size:2px 2px;box-shadow:inset 1px 1px 0 #e4e2e4"></div>
<div style="left:421px;top:533px;width:1px;height:20px;background:#6e6b6e"></div>
<div style="left:523px;top:533px;width:1px;height:20px;background:#6e6b6e"></div>
<div style="left:117px;top:553px;width:508px;height:1px;background:#6e6b6e"></div>
<div style="left:117px;top:533px;width:22px;height:21px;background:#fff;border-right:1px solid #000;border-bottom:1px solid #000"></div>
<svg style="position:absolute;left:119px;top:537px;" width="18" height="14" viewBox="0 0 18 14"><defs><linearGradient id="la119_536" x1="0" y1="0" x2="0" y2="1"><stop offset="0" stop-color="#8ed8ff"/><stop offset="1" stop-color="#2a96e6"/></linearGradient></defs><path d="M1.2,6.4 L7.5,0.5 L7.5,4.3 L15.7,4.3 Q17,4.3 17,6.5 Q17,8.7 15.7,8.7 L7.5,8.7 L7.5,12.4 Z" fill="url(#la119_536)" stroke="#1c6cc0" stroke-width="1.1"/></svg>
<div style="left:603px;top:533px;width:22px;height:21px;background:#fff;border-left:1px solid #000;border-bottom:1px solid #000"></div>
<svg style="position:absolute;left:606px;top:537px;" width="18" height="14" viewBox="0 0 18 14"><defs><linearGradient id="ra606_536" x1="0" y1="0" x2="0" y2="1"><stop offset="0" stop-color="#e0e0e0"/><stop offset="1" stop-color="#b0b0b0"/></linearGradient></defs><path d="M16.8,6.4 L10.5,0.5 L10.5,4.3 L2.3,4.3 Q1,4.3 1,6.5 Q1,8.7 2.3,8.7 L10.5,8.7 L10.5,12.4 Z" fill="url(#ra606_536)" stroke="#8a8a8a" stroke-width="1.1"/></svg>
<div class="t" style="left:116px;width:102px;text-align:center;top:532.19px;line-height:20px;font-size:11px;font-weight:normal;color:#f2f2f2;">2013</div>
<div class="t" style="left:218px;width:102px;text-align:center;top:532.19px;line-height:20px;font-size:11px;font-weight:normal;color:#f2f2f2;">2014</div>
<div class="t" style="left:320px;width:102px;text-align:center;top:532.19px;line-height:20px;font-size:11px;font-weight:normal;color:#f6f6f6;">2015</div>
<div class="t" style="left:422px;width:102px;text-align:center;top:532.19px;line-height:20px;font-size:11px;font-weight:normal;color:#f6f6f6;">2016</div>
<div class="t" style="left:524px;width:102px;text-align:center;top:532.19px;line-height:20px;font-size:11px;font-weight:normal;color:#f6f6f6;">2017</div>
<div class="t" style="left:322px;width:102px;text-align:center;top:576.19px;line-height:20px;font-size:11px;font-weight:normal;color:#000;">15.09.2015</div>
<div style="left:629px;top:532px;width:198px;height:22px;background:#c8c5fb;border:1px solid #000"></div>
<div class="t" style="left:632px;top:532.19px;line-height:20px;font-size:11px;font-weight:bold;color:#000;">STEUERKONTENABFRAGEN</div>
<div style="left:830px;top:532px;width:619px;height:22px;background:#fff;border:1px solid #000"></div>
<div style="left:931px;top:533px;width:1px;height:20px;background-image:repeating-linear-gradient(180deg,#cfcfcf 0 1px,transparent 1px 2px)"></div>
<div style="left:1033px;top:533px;width:1px;height:20px;background-image:repeating-linear-gradient(180deg,#cfcfcf 0 1px,transparent 1px 2px)"></div>
<div style="left:1135px;top:533px;width:1px;height:20px;background-image:repeating-linear-gradient(180deg,#cfcfcf 0 1px,transparent 1px 2px)"></div>
<div style="left:1237px;top:533px;width:1px;height:20px;background-image:repeating-linear-gradient(180deg,#cfcfcf 0 1px,transparent 1px 2px)"></div>
<div style="left:1339px;top:533px;width:1px;height:20px;background-image:repeating-linear-gradient(180deg,#cfcfcf 0 1px,transparent 1px 2px)"></div>
<div class="t" style="left:830px;width:80px;text-align:right;top:532.19px;line-height:20px;font-size:11px;font-weight:normal;color:#000;">17.09.2015</div>
<svg style="position:absolute;left:918px;top:535px;" width="8" height="14" viewBox="0 0 8 14"><path d="M0.5,3.5 V11 Q0.5,13.5 3.5,13.5 Q6.5,13.5 6.5,11 V2.5 Q6.5,0.5 4.5,0.5 Q2.5,0.5 2.5,2.5 V11 Q2.5,12 3.5,12 Q4.5,12 4.5,11 V3.5" fill="none" stroke="#3c5274" stroke-width="1"/></svg>
<div class="t" style="left:932px;width:80px;text-align:right;top:532.19px;line-height:20px;font-size:11px;font-weight:normal;color:#000;">01.09.2015</div>
<svg style="position:absolute;left:1020px;top:535px;" width="8" height="14" viewBox="0 0 8 14"><path d="M0.5,3.5 V11 Q0.5,13.5 3.5,13.5 Q6.5,13.5 6.5,11 V2.5 Q6.5,0.5 4.5,0.5 Q2.5,0.5 2.5,2.5 V11 Q2.5,12 3.5,12 Q4.5,12 4.5,11 V3.5" fill="none" stroke="#3c5274" stroke-width="1"/></svg>
<div style="left:629px;top:557px;width:23px;height:23px;background:#fff;border:1px solid #000"></div>
<svg style="position:absolute;left:630px;top:558px;" width="21" height="21" viewBox="0 0 21 21"><path d="M3.5,2.5 H9.5 L12.5,5.5 V13.5 H3.5 Z" fill="#f4f6fa" stroke="#8a9ab8" stroke-width="1"/><path d="M9.5,2.5 V5.5 H12.5" fill="none" stroke="#8a9ab8" stroke-width="1"/><path d="M12,10.5 C15,10.5 16.5,11.5 16.5,14.5 L16.5,16 L19,16 L15.5,19.8 L12,16 L14.3,16 L14.3,14.5 C14.3,13 13.5,12.5 12,12.5 Z" fill="#3a7ae0" stroke="#2a5ab0" stroke-width="0.5"/></svg>
<div style="left:658px;top:557px;width:23px;height:23px;background:#fff;border:1px solid #000"></div>
<svg style="position:absolute;left:659px;top:558px;" width="21" height="21" viewBox="0 0 21 21"><defs><linearGradient id="bk" x1="0" y1="0" x2="1" y2="1"><stop offset="0" stop-color="#5aa0d8"/><stop offset="1" stop-color="#1a5a98"/></linearGradient></defs><rect x="4" y="4" width="13" height="14" fill="url(#bk)"/><rect x="4" y="4" width="2.5" height="14" fill="#333"/><path d="M13.5,9.5 H18 V12 H13.5 Z" fill="#222"/><circle cx="14" cy="10.8" r="1" fill="#ddd"/></svg>
<div style="left:629px;top:590px;width:198px;height:22px;background:#c8c5fb;border:1px solid #000"></div>
<div class="t" style="left:632px;top:590.19px;line-height:20px;font-size:11px;font-weight:bold;color:#000;">KONTINGENTIERUNG</div>
<div style="left:830px;top:590px;width:619px;height:22px;background:#fff;border:1px solid #000"></div>
<div style="left:1442px;top:591px;width:6px;height:20px;background-color:#fcf8fc;background-image:repeating-conic-gradient(#f4f1f4 0 25%,#fdf8fd 0 50%);background-size:2px 2px;"></div>
<div style="left:931px;top:591px;width:1px;height:20px;background-image:repeating-linear-gradient(180deg,#cfcfcf 0 1px,transparent 1px 2px)"></div>
<div style="left:1033px;top:591px;width:1px;height:20px;background-image:repeating-linear-gradient(180deg,#cfcfcf 0 1px,transparent 1px 2px)"></div>
<div style="left:1135px;top:591px;width:1px;height:20px;background-image:repeating-linear-gradient(180deg,#cfcfcf 0 1px,transparent 1px 2px)"></div>
<div style="left:1237px;top:591px;width:1px;height:20px;background-image:repeating-linear-gradient(180deg,#cfcfcf 0 1px,transparent 1px 2px)"></div>
<div style="left:1339px;top:591px;width:1px;height:20px;background-image:repeating-linear-gradient(180deg,#cfcfcf 0 1px,transparent 1px 2px)"></div>
<div style="left:1441px;top:591px;width:1px;height:20px;background-image:repeating-linear-gradient(180deg,#cfcfcf 0 1px,transparent 1px 2px)"></div>
<div class="t" style="left:833px;top:590.19px;line-height:20px;font-size:11px;font-weight:normal;color:#000;">Teilnahme:</div>
<svg style="position:absolute;left:933px;top:592px;" width="17" height="17" viewBox="0 0 17 17"><defs><radialGradient id="nr" cx="0.4" cy="0.35" r="0.7"><stop offset="0" stop-color="#f04040"/><stop offset="1" stop-color="#a80000"/></radialGradient></defs><circle cx="7.8" cy="7.8" r="7.2" fill="#e8e8e8" stroke="#8a8a8a" stroke-width="1"/><circle cx="7.8" cy="7.8" r="5.6" fill="url(#nr)"/><rect x="4" y="6.5" width="7.6" height="2.7" rx="0.5" fill="#fff"/></svg>
<div class="t" style="left:953px;top:590.19px;line-height:20px;font-size:11px;font-weight:normal;color:#000;">2013</div>
<svg style="position:absolute;left:1035px;top:592px;" width="17" height="17" viewBox="0 0 17 17"><defs><radialGradient id="ng0" cx="0.4" cy="0.35" r="0.7"><stop offset="0" stop-color="#70d040"/><stop offset="1" stop-color="#1a8a1a"/></radialGradient></defs><circle cx="7.8" cy="7.8" r="7.2" fill="#e8e8e8" stroke="#8a8a8a" stroke-width="1"/><circle cx="7.8" cy="7.8" r="5.6" fill="url(#ng0)"/><path d="M4.3,7.8 L6.8,10.8 L11.3,4.5" fill="none" stroke="#fff" stroke-width="2"/></svg>
<div class="t" style="left:1054px;top:590.19px;line-height:20px;font-size:11px;font-weight:normal;color:#000;">2014</div>
<svg style="position:absolute;left:1137px;top:592px;" width="17" height="17" viewBox="0 0 17 17"><defs><radialGradient id="ng1" cx="0.4" cy="0.35" r="0.7"><stop offset="0" stop-color="#70d040"/><stop offset="1" stop-color="#1a8a1a"/></radialGradient></defs><circle cx="7.8" cy="7.8" r="7.2" fill="#e8e8e8" stroke="#8a8a8a" stroke-width="1"/><circle cx="7.8" cy="7.8" r="5.6" fill="url(#ng1)"/><path d="M4.3,7.8 L6.8,10.8 L11.3,4.5" fill="none" stroke="#fff" stroke-width="2"/></svg>
<div class="t" style="left:1156px;top:590.19px;line-height:20px;font-size:11px;font-weight:normal;color:#000;">2015</div>
<svg style="position:absolute;left:1239px;top:592px;" width="17" height="17" viewBox="0 0 17 17"><defs><radialGradient id="ng2" cx="0.4" cy="0.35" r="0.7"><stop offset="0" stop-color="#70d040"/><stop offset="1" stop-color="#1a8a1a"/></radialGradient></defs><circle cx="7.8" cy="7.8" r="7.2" fill="#e8e8e8" stroke="#8a8a8a" stroke-width="1"/><circle cx="7.8" cy="7.8" r="5.6" fill="url(#ng2)"/><path d="M4.3,7.8 L6.8,10.8 L11.3,4.5" fill="none" stroke="#fff" stroke-width="2"/></svg>
<div class="t" style="left:1258px;top:590.19px;line-height:20px;font-size:11px;font-weight:normal;color:#000;">2016</div>
<svg style="position:absolute;left:1341px;top:592px;" width="17" height="17" viewBox="0 0 17 17"><defs><radialGradient id="ng3" cx="0.4" cy="0.35" r="0.7"><stop offset="0" stop-color="#70d040"/><stop offset="1" stop-color="#1a8a1a"/></radialGradient></defs><circle cx="7.8" cy="7.8" r="7.2" fill="#e8e8e8" stroke="#8a8a8a" stroke-width="1"/><circle cx="7.8" cy="7.8" r="5.6" fill="url(#ng3)"/><path d="M4.3,7.8 L6.8,10.8 L11.3,4.5" fill="none" stroke="#fff" stroke-width="2"/></svg>
<div class="t" style="left:1360px;top:590.19px;line-height:20px;font-size:11px;font-weight:normal;color:#000;">2017</div>
<div style="left:629px;top:649px;width:198px;height:22px;background:#c8c5fb;border:1px solid #000"></div>
<div class="t" style="left:632px;top:649.19px;line-height:20px;font-size:11px;font-weight:bold;color:#000;">BERICHTE BP</div>
<div style="left:830px;top:649px;width:619px;height:22px;background:#fff;border:1px solid #000"></div>
<div style="left:931px;top:650px;width:1px;height:20px;background-image:repeating-linear-gradient(180deg,#cfcfcf 0 1px,transparent 1px 2px)"></div>
<div style="left:1033px;top:650px;width:1px;height:20px;background-image:repeating-linear-gradient(180deg,#cfcfcf 0 1px,transparent 1px 2px)"></div>
<div style="left:1135px;top:650px;width:1px;height:20px;background-image:repeating-linear-gradient(180deg,#cfcfcf 0 1px,transparent 1px 2px)"></div>
<div style="left:1237px;top:650px;width:1px;height:20px;background-image:repeating-linear-gradient(180deg,#cfcfcf 0 1px,transparent 1px 2px)"></div>
<div style="left:1339px;top:650px;width:1px;height:20px;background-image:repeating-linear-gradient(180deg,#cfcfcf 0 1px,transparent 1px 2px)"></div>
<div class="t" style="left:830px;width:80px;text-align:right;top:649.19px;line-height:20px;font-size:11px;font-weight:normal;color:#000;">13.10.2015</div>
<svg style="position:absolute;left:918px;top:652px;" width="8" height="14" viewBox="0 0 8 14"><path d="M0.5,3.5 V11 Q0.5,13.5 3.5,13.5 Q6.5,13.5 6.5,11 V2.5 Q6.5,0.5 4.5,0.5 Q2.5,0.5 2.5,2.5 V11 Q2.5,12 3.5,12 Q4.5,12 4.5,11 V3.5" fill="none" stroke="#3c5274" stroke-width="1"/></svg>
<div class="t" style="left:932px;width:80px;text-align:right;top:649.19px;line-height:20px;font-size:11px;font-weight:normal;color:#000;">25.09.2014</div>
<svg style="position:absolute;left:1020px;top:652px;" width="8" height="14" viewBox="0 0 8 14"><path d="M0.5,3.5 V11 Q0.5,13.5 3.5,13.5 Q6.5,13.5 6.5,11 V2.5 Q6.5,0.5 4.5,0.5 Q2.5,0.5 2.5,2.5 V11 Q2.5,12 3.5,12 Q4.5,12 4.5,11 V3.5" fill="none" stroke="#3c5274" stroke-width="1"/></svg>
<div style="left:629px;top:708px;width:198px;height:22px;background:#c8c5fb;border:1px solid #000"></div>
<div class="t" style="left:632px;top:708.19px;line-height:20px;font-size:11px;font-weight:bold;color:#000;">VOLLMACHTSDATENBANK</div>
<div style="left:830px;top:708px;width:619px;height:22px;background:#fff;border:1px solid #000"></div>
<div style="left:1238px;top:709px;width:210px;height:20px;background-color:#fcf8fc;background-image:repeating-conic-gradient(#f4f1f4 0 25%,#fdf8fd 0 50%);background-size:2px 2px;"></div>
<div style="left:931px;top:709px;width:1px;height:20px;background-image:repeating-linear-gradient(180deg,#cfcfcf 0 1px,transparent 1px 2px)"></div>
<div style="left:1033px;top:709px;width:1px;height:20px;background-image:repeating-linear-gradient(180deg,#cfcfcf 0 1px,transparent 1px 2px)"></div>
<div style="left:1135px;top:709px;width:1px;height:20px;background-image:repeating-linear-gradient(180deg,#cfcfcf 0 1px,transparent 1px 2px)"></div>
<div style="left:1237px;top:709px;width:1px;height:20px;background-image:repeating-linear-gradient(180deg,#cfcfcf 0 1px,transparent 1px 2px)"></div>
<div style="left:1339px;top:709px;width:1px;height:20px;background-image:repeating-linear-gradient(180deg,#cfcfcf 0 1px,transparent 1px 2px)"></div>
<div class="t" style="left:833px;top:708.19px;line-height:20px;font-size:11px;font-weight:normal;color:#000;">Vollmacht vom:</div>
<div class="t" style="left:932px;width:80px;text-align:right;top:708.19px;line-height:20px;font-size:11px;font-weight:normal;color:#000;">09.03.2015</div>
<svg style="position:absolute;left:1020px;top:711px;" width="8" height="14" viewBox="0 0 8 14"><path d="M0.5,3.5 V11 Q0.5,13.5 3.5,13.5 Q6.5,13.5 6.5,11 V2.5 Q6.5,0.5 4.5,0.5 Q2.5,0.5 2.5,2.5 V11 Q2.5,12 3.5,12 Q4.5,12 4.5,11 V3.5" fill="none" stroke="#3c5274" stroke-width="1"/></svg>
<div class="t" style="left:1037px;top:708.19px;line-height:20px;font-size:11px;font-weight:normal;color:#000;">&uuml;bermittelt am:</div>
<div style="left:116px;top:151px;width:1333px;height:88px;border:1px solid #000"></div>
<div style="left:116px;top:271px;width:1333px;height:66px;border:1px solid #000"></div>
<div style="left:116px;top:369px;width:1333px;height:154px;border:1px solid #000"></div>
<div style="left:116px;top:532px;width:510px;height:198px;border:1px solid #000"></div>
</body></html>
